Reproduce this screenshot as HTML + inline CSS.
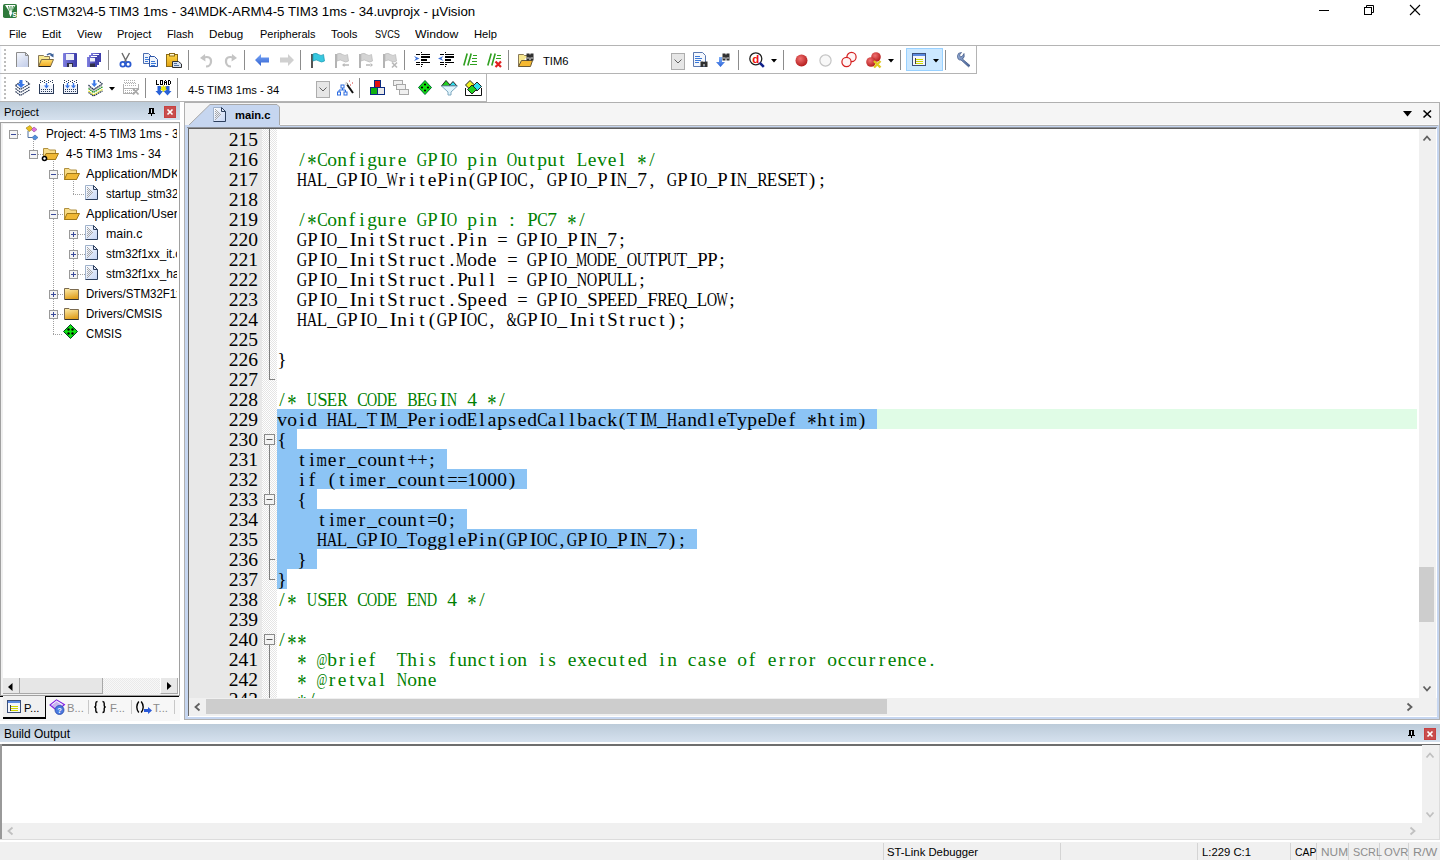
<!DOCTYPE html><html><head><meta charset="utf-8"><style>
html,body{margin:0;padding:0;width:1440px;height:860px;overflow:hidden;background:#fff;position:relative}
.t{position:absolute;white-space:nowrap}
svg{position:absolute;overflow:visible}
.c{position:absolute;left:277px;height:20px;white-space:pre;font-family:"Liberation Serif",serif;font-size:19.5px;line-height:20px}
.c i{display:inline-block;width:10px;text-align:center;font-style:normal;height:20px;vertical-align:top}
.c b{display:inline-block;font-weight:normal}
.ln{position:absolute;left:189px;width:69px;text-align:right;font-family:"Liberation Serif",serif;font-size:19.5px;line-height:20px;height:20px;color:#000}
</style></head><body>
<svg style="position:absolute;left:3px;top:4px" width="14" height="14" viewBox="0 0 14 14"><rect x="0" y="0" width="14" height="14" rx="1.8" fill="#2f7a3c"/><path d="M2 1 H12.5 L8.5 8 L9.5 8.5 L7.5 13 L6 9 L6.5 8 Z" fill="#fff"/><path d="M5.5 2 L6.5 6.5 M8 2 V6.5 M10.5 2 L9.5 6.5" stroke="#4d9a5a" stroke-width="1.1"/><text x="9.3" y="13.2" font-size="8.5" font-family="Liberation Sans" font-weight="bold" fill="#fff">s</text></svg>
<div class="t" style="left:23px;top:4.76px;line-height:13.28px;font-size:13.28px;color:#000;font-weight:normal;font-family:'Liberation Sans',sans-serif;">C:\STM32\4-5 TIM3 1ms - 34\MDK-ARM\4-5 TIM3 1ms - 34.uvprojx - µVision</div>
<div style="position:absolute;left:1319px;top:10px;width:10px;height:1px;background:#000"></div>
<svg style="position:absolute;left:1364px;top:5px" width="11" height="11" viewBox="0 0 11 11"><rect x="0.5" y="2.5" width="7" height="7" fill="none" stroke="#000"/><path d="M2.5 2.5 V0.5 H9.5 V7.5 H7.5" fill="none" stroke="#000"/></svg>
<svg style="position:absolute;left:1410px;top:5px" width="11" height="11" viewBox="0 0 11 11"><path d="M0 0 L10 10 M10 0 L0 10" stroke="#000" stroke-width="1.1"/></svg>
<div class="t" style="left:9.00px;top:29.15px;line-height:11.4px;font-size:11.4px;color:#000;font-weight:normal;font-family:'Liberation Sans'"><span style="display:inline-block;transform-origin:0 0;transform:scaleX(0.9535)">File</span></div>
<div class="t" style="left:42.40px;top:29.15px;line-height:11.4px;font-size:11.4px;color:#000;font-weight:normal;font-family:'Liberation Sans'"><span style="display:inline-block;transform-origin:0 0;transform:scaleX(0.9662)">Edit</span></div>
<div class="t" style="left:77.30px;top:29.15px;line-height:11.4px;font-size:11.4px;color:#000;font-weight:normal;font-family:'Liberation Sans'"><span style="display:inline-block;transform-origin:0 0;transform:scaleX(1.0078)">View</span></div>
<div class="t" style="left:117.30px;top:29.15px;line-height:11.4px;font-size:11.4px;color:#000;font-weight:normal;font-family:'Liberation Sans'"><span style="display:inline-block;transform-origin:0 0;transform:scaleX(0.9675)">Project</span></div>
<div class="t" style="left:167.00px;top:29.15px;line-height:11.4px;font-size:11.4px;color:#000;font-weight:normal;font-family:'Liberation Sans'"><span style="display:inline-block;transform-origin:0 0;transform:scaleX(0.9507)">Flash</span></div>
<div class="t" style="left:209.40px;top:29.15px;line-height:11.4px;font-size:11.4px;color:#000;font-weight:normal;font-family:'Liberation Sans'"><span style="display:inline-block;transform-origin:0 0;transform:scaleX(1.0217)">Debug</span></div>
<div class="t" style="left:259.50px;top:29.15px;line-height:11.4px;font-size:11.4px;color:#000;font-weight:normal;font-family:'Liberation Sans'"><span style="display:inline-block;transform-origin:0 0;transform:scaleX(0.9621)">Peripherals</span></div>
<div class="t" style="left:331.00px;top:29.15px;line-height:11.4px;font-size:11.4px;color:#000;font-weight:normal;font-family:'Liberation Sans'"><span style="display:inline-block;transform-origin:0 0;transform:scaleX(0.9955)">Tools</span></div>
<div class="t" style="left:374.50px;top:29.15px;line-height:11.4px;font-size:11.4px;color:#000;font-weight:normal;font-family:'Liberation Sans'"><span style="display:inline-block;transform-origin:0 0;transform:scaleX(0.8048)">SVCS</span></div>
<div class="t" style="left:415.00px;top:29.15px;line-height:11.4px;font-size:11.4px;color:#000;font-weight:normal;font-family:'Liberation Sans'"><span style="display:inline-block;transform-origin:0 0;transform:scaleX(1.0719)">Window</span></div>
<div class="t" style="left:474.00px;top:29.15px;line-height:11.4px;font-size:11.4px;color:#000;font-weight:normal;font-family:'Liberation Sans'"><span style="display:inline-block;transform-origin:0 0;transform:scaleX(0.9818)">Help</span></div>
<div style="position:absolute;left:0px;top:45px;width:1440px;height:1px;background:#b4b4b4"></div>
<div style="position:absolute;left:976px;top:45px;width:1px;height:29px;background:#b4b4b4"></div>
<div style="position:absolute;left:0px;top:73px;width:977px;height:1px;background:#b4b4b4"></div>
<div style="position:absolute;left:486px;top:73px;width:1px;height:29px;background:#b4b4b4"></div>
<div style="position:absolute;left:0px;top:101px;width:487px;height:1px;background:#b4b4b4"></div>
<div style="position:absolute;left:0px;top:46px;width:2px;height:27px;background:linear-gradient(90deg,#eef2fa,#fff)"></div>
<div style="position:absolute;left:0px;top:74px;width:2px;height:27px;background:linear-gradient(90deg,#eef2fa,#fff)"></div>
<div style="position:absolute;left:4px;top:49px;width:2px;height:2px;background:#bdbdbd"></div>
<div style="position:absolute;left:4px;top:53px;width:2px;height:2px;background:#bdbdbd"></div>
<div style="position:absolute;left:4px;top:57px;width:2px;height:2px;background:#bdbdbd"></div>
<div style="position:absolute;left:4px;top:61px;width:2px;height:2px;background:#bdbdbd"></div>
<div style="position:absolute;left:4px;top:65px;width:2px;height:2px;background:#bdbdbd"></div>
<div style="position:absolute;left:4px;top:69px;width:2px;height:2px;background:#bdbdbd"></div>
<div style="position:absolute;left:4px;top:77px;width:2px;height:2px;background:#bdbdbd"></div>
<div style="position:absolute;left:4px;top:81px;width:2px;height:2px;background:#bdbdbd"></div>
<div style="position:absolute;left:4px;top:85px;width:2px;height:2px;background:#bdbdbd"></div>
<div style="position:absolute;left:4px;top:89px;width:2px;height:2px;background:#bdbdbd"></div>
<div style="position:absolute;left:4px;top:93px;width:2px;height:2px;background:#bdbdbd"></div>
<div style="position:absolute;left:4px;top:97px;width:2px;height:2px;background:#bdbdbd"></div>
<div style="position:absolute;left:108px;top:50px;width:1px;height:20px;background:#8c8c8c"></div>
<div style="position:absolute;left:188px;top:50px;width:1px;height:20px;background:#8c8c8c"></div>
<div style="position:absolute;left:244px;top:50px;width:1px;height:20px;background:#8c8c8c"></div>
<div style="position:absolute;left:300px;top:50px;width:1px;height:20px;background:#8c8c8c"></div>
<div style="position:absolute;left:404px;top:50px;width:1px;height:20px;background:#8c8c8c"></div>
<div style="position:absolute;left:508px;top:50px;width:1px;height:20px;background:#8c8c8c"></div>
<div style="position:absolute;left:738px;top:50px;width:1px;height:20px;background:#8c8c8c"></div>
<div style="position:absolute;left:783px;top:50px;width:1px;height:20px;background:#8c8c8c"></div>
<div style="position:absolute;left:900px;top:50px;width:1px;height:20px;background:#8c8c8c"></div>
<div style="position:absolute;left:945px;top:50px;width:1px;height:20px;background:#8c8c8c"></div>
<div style="position:absolute;left:145px;top:78px;width:1px;height:20px;background:#8c8c8c"></div>
<div style="position:absolute;left:177px;top:78px;width:1px;height:20px;background:#8c8c8c"></div>
<div style="position:absolute;left:359px;top:78px;width:1px;height:20px;background:#8c8c8c"></div>
<svg style="position:absolute;left:16px;top:52px" width="13" height="15" viewBox="0 0 13 15"><defs><linearGradient id="gnew" x1="0" y1="0" x2="0.6" y2="1"><stop offset="0" stop-color="#f6f8fd"/><stop offset="1" stop-color="#c8d2ec"/></linearGradient></defs><path d="M0.5 15 V0.5 H9.5 L12.5 3.5 V15 Z" fill="url(#gnew)" stroke="none"/><path d="M0.5 15 V0.5 H9.5 L12.5 3.5 V15" fill="none" stroke="#8c8c8c"/><path d="M9.5 0.5 V3.5 H12.5" fill="none" stroke="#8c8c8c"/></svg>
<svg style="position:absolute;left:38px;top:53px" width="17" height="14" viewBox="0 0 17 14"><defs><linearGradient id="gfo" x1="0" y1="0" x2="0" y2="1"><stop offset="0" stop-color="#ffe070"/><stop offset="1" stop-color="#f0a820"/></linearGradient></defs><path d="M0.5 13.5 V2.5 H5.5 L6.5 3.5 H11.5 V6" fill="#f8e890" stroke="#8a7a58"/><path d="M0.5 13.5 L3.5 6.5 H15.5 L12.5 13.5 Z" fill="url(#gfo)" stroke="#7a6a48"/><path d="M1 13.5 H12.5" stroke="#222"/><path d="M9 2 Q11.5 -0.5 14 1.8" fill="none" stroke="#3a5f98" stroke-width="1.5"/><path d="M12 2.5 L15.5 4.5 L15.5 0.5 Z" fill="#3a5f98"/></svg>
<svg style="position:absolute;left:63px;top:53px" width="14" height="14" viewBox="0 0 14 14"><defs><linearGradient id="gsv" x1="0" y1="0" x2="1" y2="0"><stop offset="0" stop-color="#8080e0"/><stop offset="1" stop-color="#3a3aa8"/></linearGradient></defs><rect x="0" y="0" width="14" height="14" rx="0.8" fill="url(#gsv)"/><rect x="3" y="1" width="8" height="6" fill="#eef0f8"/><rect x="4" y="10" width="6" height="4" fill="#303048"/><rect x="6" y="11" width="3" height="3" fill="#e0e0e0"/></svg>
<svg style="position:absolute;left:87px;top:53px" width="14" height="14" viewBox="0 0 14 14"><defs><linearGradient id="gsa" x1="0" y1="0" x2="1" y2="0"><stop offset="0" stop-color="#8080e0"/><stop offset="1" stop-color="#3a3aa8"/></linearGradient></defs><rect x="4" y="0" width="10" height="9" fill="url(#gsa)"/><rect x="6" y="1" width="6" height="1.5" fill="#fff"/><rect x="2" y="2" width="10" height="10" fill="url(#gsa)"/><rect x="4" y="3" width="6" height="1.5" fill="#fff"/><rect x="0" y="4" width="10" height="10" fill="url(#gsa)"/><rect x="3" y="5" width="5" height="3.5" fill="#eef0f8"/><rect x="3" y="10.5" width="5" height="3.5" fill="#303048"/></svg>
<svg style="position:absolute;left:120px;top:53px" width="11" height="14" viewBox="0 0 11 14"><path d="M2 0 L6.5 9 M9.5 0 L4.5 9" stroke="#6a6a6a" stroke-width="1.4"/><circle cx="2.8" cy="11.2" r="2.4" fill="none" stroke="#2a5ad0" stroke-width="1.8"/><circle cx="8.2" cy="11.2" r="2.4" fill="none" stroke="#2a5ad0" stroke-width="1.8"/></svg>
<svg style="position:absolute;left:143px;top:53px" width="15" height="14" viewBox="0 0 15 14"><path d="M0.5 0.5 H5.5 L8.5 3.5 V10.5 H0.5 Z" fill="#f0f4fb" stroke="#4a6cb0"/><path d="M6.5 3.5 H11.5 L14.5 6.5 V13.5 H6.5 Z" fill="#f0f4fb" stroke="#2b53a8"/><path d="M2 4.5 H5 M2 6.5 H6 M2 8.5 H5 M8 8.5 H12 M8 10.5 H13 M8 12 H12" stroke="#3a78d8" shape-rendering="crispEdges"/></svg>
<svg style="position:absolute;left:166px;top:53px" width="17" height="15" viewBox="0 0 17 15"><defs><linearGradient id="gps" x1="0" y1="0" x2="0" y2="1"><stop offset="0" stop-color="#ffd84a"/><stop offset="1" stop-color="#e0a010"/></linearGradient></defs><rect x="0.5" y="1.5" width="11" height="12" fill="url(#gps)" stroke="#8a6a18"/><rect x="3.5" y="0.5" width="5" height="2.5" fill="#fff8d0" stroke="#8a6a18"/><path d="M6.5 8.5 H12.5 L15.5 11 V14.5 H6.5 Z" fill="#d8e2f0" stroke="#303030"/><path d="M8 10.5 H11 M8 12.5 H13" stroke="#5070a0" shape-rendering="crispEdges"/></svg>
<svg style="position:absolute;left:200px;top:54px" width="13" height="13" viewBox="0 0 13 13"><path d="M3.5 3.5 Q11.5 1.5 11 8 Q10.5 12.5 6 12.5" fill="none" stroke="#c4c4c4" stroke-width="2.2"/><path d="M0 4 L5 0 L5.5 7.5 Z" fill="#c4c4c4"/></svg>
<svg style="position:absolute;left:224px;top:54px" width="13" height="13" viewBox="0 0 13 13"><path d="M9.5 3.5 Q1.5 1.5 2 8 Q2.5 12.5 7 12.5" fill="none" stroke="#c4c4c4" stroke-width="2.2"/><path d="M13 4 L8 0 L7.5 7.5 Z" fill="#c4c4c4"/></svg>
<svg style="position:absolute;left:255px;top:54px" width="15" height="12" viewBox="0 0 15 12"><defs><linearGradient id="gba" x1="0" y1="0" x2="0" y2="1"><stop offset="0" stop-color="#7aa8f8"/><stop offset="1" stop-color="#3060d0"/></linearGradient></defs><path d="M0 6 L6 0 V3.5 H14 V8.5 H6 V12 Z" fill="url(#gba)"/></svg>
<svg style="position:absolute;left:279px;top:54px" width="15" height="12" viewBox="0 0 15 12"><path d="M15 6 L9 0 V3.5 H1 V8.5 H9 V12 Z" fill="#d0d0d0"/></svg>
<svg style="position:absolute;left:311px;top:53px" width="14" height="15" viewBox="0 0 14 15"><rect x="0" y="1" width="2" height="14" fill="#555"/><path d="M2 1 Q5 -0.5 7.5 1.5 Q10 3.5 12.5 1.5 L13.5 8 Q10.5 10 8 8 Q5.5 6 2 8 Z" fill="#38c8e0" stroke="#1898b0" stroke-width="0.7"/></svg>
<svg style="position:absolute;left:335px;top:53px" width="15" height="15" viewBox="0 0 15 15"><rect x="0" y="1" width="2" height="14" fill="#b4b4b4"/><path d="M2 1 Q5 -0.5 7.5 1.5 Q10 3.5 12.5 1.5 L13.5 8 Q10.5 10 8 8 Q5.5 6 2 8 Z" fill="#d4d4d4" stroke="#b8b8b8" stroke-width="0.7"/><path d="M7 12 L9.5 10 V14 Z M9 11.2 H14 V12.8 H9 Z" fill="#b8b8b8"/></svg>
<svg style="position:absolute;left:359px;top:53px" width="15" height="15" viewBox="0 0 15 15"><rect x="0" y="1" width="2" height="14" fill="#b4b4b4"/><path d="M2 1 Q5 -0.5 7.5 1.5 Q10 3.5 12.5 1.5 L13.5 8 Q10.5 10 8 8 Q5.5 6 2 8 Z" fill="#d4d4d4" stroke="#b8b8b8" stroke-width="0.7"/><path d="M14 12 L11.5 10 V14 Z M7 11.2 H12 V12.8 H7 Z" fill="#b8b8b8"/></svg>
<svg style="position:absolute;left:383px;top:53px" width="15" height="15" viewBox="0 0 15 15"><rect x="0" y="1" width="2" height="14" fill="#b4b4b4"/><path d="M2 1 Q5 -0.5 7.5 1.5 Q10 3.5 12.5 1.5 L13.5 8 Q10.5 10 8 8 Q5.5 6 2 8 Z" fill="#d4d4d4" stroke="#b8b8b8" stroke-width="0.7"/><path d="M9 9.5 L14 14.5 M14 9.5 L9 14.5" stroke="#b8b8b8" stroke-width="1.6"/></svg>
<svg style="position:absolute;left:414px;top:52px" width="16" height="16" viewBox="0 0 16 16"><g fill="#000" shape-rendering="crispEdges"><rect x="7" y="0" width="1" height="1"/><rect x="2" y="2" width="4" height="1"/><rect x="7" y="2" width="9" height="1"/><rect x="7" y="4" width="9" height="2"/><rect x="7" y="7" width="6" height="2"/><rect x="2" y="10" width="4" height="1"/><rect x="7" y="10" width="9" height="1"/><rect x="2" y="12" width="4" height="1"/><rect x="7" y="12" width="2" height="1"/><rect x="7" y="14" width="1" height="1"/></g><path d="M0 4 L5.5 6.5 L0 9 L2 6.5 Z" fill="#3a6fd8"/></svg>
<svg style="position:absolute;left:438px;top:52px" width="16" height="16" viewBox="0 0 16 16"><g fill="#000" shape-rendering="crispEdges"><rect x="7" y="0" width="1" height="1"/><rect x="2" y="2" width="4" height="1"/><rect x="7" y="2" width="9" height="1"/><rect x="7" y="4" width="9" height="2"/><rect x="7" y="7" width="6" height="2"/><rect x="2" y="10" width="4" height="1"/><rect x="7" y="10" width="9" height="1"/><rect x="2" y="12" width="4" height="1"/><rect x="7" y="12" width="2" height="1"/><rect x="7" y="14" width="1" height="1"/></g><path d="M5.5 4 L0 6.5 L5.5 9 L3.5 6.5 Z" fill="#3a6fd8"/></svg>
<svg style="position:absolute;left:463px;top:53px" width="15" height="13" viewBox="0 0 15 13"><path d="M4.2 0.5 L0.8 12.5 M8.2 0.5 L4.8 12.5" stroke="#30a020" stroke-width="1.6"/><g fill="#30a020" shape-rendering="crispEdges"><rect x="10" y="2" width="4" height="1"/><rect x="9" y="5" width="5" height="1"/><rect x="9" y="8" width="5" height="1"/><rect x="7" y="11" width="7" height="1"/></g></svg>
<svg style="position:absolute;left:487px;top:53px" width="16" height="15" viewBox="0 0 16 15"><path d="M4.2 0.5 L0.8 12.5 M8.2 0.5 L4.8 12.5" stroke="#30a020" stroke-width="1.6"/><g fill="#30a020" shape-rendering="crispEdges"><rect x="10" y="2" width="4" height="1"/><rect x="9" y="5" width="5" height="1"/></g><path d="M8.5 8.5 L14 14 M14 8.5 L8.5 14" stroke="#e02020" stroke-width="2.2"/></svg>
<svg style="position:absolute;left:518px;top:52px" width="17" height="15" viewBox="0 0 17 15"><path d="M0.5 14.5 V2.5 H5.5 L6.5 3.5 H10" fill="#f8e890" stroke="#8a7a58"/><path d="M0.5 14.5 L3.5 8.5 H14.5 L12.5 14.5 Z" fill="#f5b830" stroke="#6a5a38"/><path d="M8.5 1.5 H11.5 V8.5 H8.5 Z M12.5 1.5 H15.5 V8.5 H12.5 Z" fill="#303030"/><rect x="9.5" y="5" width="1" height="2" fill="#ddd"/><rect x="13.5" y="5" width="1" height="2" fill="#ddd"/><rect x="11" y="2.5" width="2" height="3" fill="#303030"/></svg>
<div class="t" style="left:543px;top:56.02px;line-height:11.2px;font-size:11.2px;color:#000;font-weight:normal;font-family:'Liberation Sans',sans-serif;">TIM6</div>
<div style="position:absolute;left:671px;top:53px;width:14px;height:17px;background:#e6e6e6;border:1px solid #adadad;box-sizing:border-box"></div>
<svg style="position:absolute;left:674px;top:59px" width="8" height="5" viewBox="0 0 8 5"><path d="M0.5 0.5 L4 4 L7.5 0.5" fill="none" stroke="#606060"/></svg>
<svg style="position:absolute;left:693px;top:52px" width="16" height="15" viewBox="0 0 16 15"><path d="M0.5 0.5 H9.5 L12.5 3.5 V14.5 H0.5 Z" fill="#f4f7fc" stroke="#5a78b0"/><g fill="#3a78d8" shape-rendering="crispEdges"><rect x="2" y="4" width="5" height="1"/><rect x="2" y="6" width="7" height="1"/><rect x="2" y="8" width="6" height="1"/><rect x="2" y="10" width="4" height="1"/></g><path d="M7.5 9.5 H10.5 V15 H7.5 Z M11.5 9.5 H14.5 V15 H11.5 Z" fill="#303030"/><rect x="10" y="10" width="2" height="2" fill="#303030"/></svg>
<svg style="position:absolute;left:716px;top:52px" width="16" height="16" viewBox="0 0 16 16"><defs><linearGradient id="gda" x1="0" y1="0" x2="0" y2="1"><stop offset="0" stop-color="#80b0f8"/><stop offset="1" stop-color="#2a62d8"/></linearGradient></defs><path d="M3 5 V10 H0 L4.5 15 L9 10 H6 V5 Z" fill="url(#gda)"/><path d="M6.5 1.5 H9.5 V8.5 H6.5 Z M10.5 1.5 H13.5 V8.5 H10.5 Z" fill="#303030"/><rect x="9" y="2.5" width="2" height="3" fill="#303030"/><rect x="7.5" y="5" width="1" height="2" fill="#ddd"/><rect x="11.5" y="5" width="1" height="2" fill="#ddd"/></svg>
<svg style="position:absolute;left:749px;top:52px" width="16" height="16" viewBox="0 0 16 16"><circle cx="6.8" cy="6.8" r="6" fill="#fff" stroke="#202020" stroke-width="1.3"/><text x="3.2" y="11.3" font-size="11.5" font-family="Liberation Sans" font-weight="bold" fill="#f01010">d</text><path d="M10.8 10.8 L14.8 14.8" stroke="#10208a" stroke-width="2.6"/></svg>
<svg style="position:absolute;left:771px;top:59px" width="6" height="4" viewBox="0 0 6 4"><path d="M0 0 H6 L3 3.5 Z" fill="#000"/></svg>
<svg style="position:absolute;left:795px;top:54px" width="13" height="13" viewBox="0 0 13 13"><defs><radialGradient id="rb" cx="0.4" cy="0.35" r="0.7"><stop offset="0" stop-color="#f07070"/><stop offset="1" stop-color="#b01818"/></radialGradient></defs><circle cx="6.5" cy="6.5" r="6" fill="url(#rb)"/></svg>
<svg style="position:absolute;left:819px;top:54px" width="13" height="13" viewBox="0 0 13 13"><circle cx="6.5" cy="6.5" r="5.6" fill="#f8f8f8" stroke="#c4c4c4" stroke-width="1.2"/></svg>
<svg style="position:absolute;left:841px;top:52px" width="16" height="15" viewBox="0 0 16 15"><circle cx="10.5" cy="5" r="4.6" fill="#fff4f4" stroke="#d42020" stroke-width="1.2"/><circle cx="5.5" cy="10" r="4.6" fill="#fff4f4" stroke="#d42020" stroke-width="1.2"/></svg>
<svg style="position:absolute;left:866px;top:52px" width="17" height="16" viewBox="0 0 17 16"><defs><radialGradient id="rb2" cx="0.4" cy="0.35" r="0.7"><stop offset="0" stop-color="#f07070"/><stop offset="1" stop-color="#b01818"/></radialGradient></defs><circle cx="10" cy="5" r="4.8" fill="url(#rb2)"/><circle cx="5" cy="10" r="4.8" fill="url(#rb2)"/><path d="M8 9 L14.5 15.5 M14.5 9 L8 15.5" stroke="#e0c820" stroke-width="2.4"/></svg>
<svg style="position:absolute;left:888px;top:59px" width="6" height="4" viewBox="0 0 6 4"><path d="M0 0 H6 L3 3.5 Z" fill="#000"/></svg>
<div style="position:absolute;left:906px;top:48px;width:37px;height:23px;background:#cce8ff;border:1px solid #99d1ff;box-sizing:border-box"></div>
<svg style="position:absolute;left:912px;top:53px" width="15" height="14" viewBox="0 0 15 14"><rect x="0.5" y="0.5" width="13" height="12" fill="#f4f6fb" stroke="#3b4f7a"/><rect x="1" y="1" width="12" height="2" fill="#5b8ae0"/><g shape-rendering="crispEdges"><rect x="3" y="5" width="1" height="6" fill="#444"/><rect x="4" y="6" width="7" height="1" fill="#d0d800"/><rect x="4" y="8" width="7" height="1" fill="#d0d800"/><rect x="4" y="10" width="7" height="1" fill="#d0d800"/></g></svg>
<svg style="position:absolute;left:933px;top:59px" width="6" height="4" viewBox="0 0 6 4"><path d="M0 0 H6 L3 3.5 Z" fill="#000"/></svg>
<svg style="position:absolute;left:956px;top:52px" width="15" height="15" viewBox="0 0 15 15"><defs><linearGradient id="gwr" x1="0" y1="0" x2="1" y2="1"><stop offset="0" stop-color="#a0b8e0"/><stop offset="1" stop-color="#405c90"/></linearGradient></defs><path d="M1.5 4 Q1.5 0.5 5.5 0.5 L3.5 3 L4.5 5 L6.5 4 L8 1.5 Q9 5.5 6.5 7 L14 13.5 L12.5 14.8 L5 8 Q1.5 8.5 1.5 4 Z" fill="url(#gwr)" stroke="#3a5080" stroke-width="0.7"/></svg>
<svg style="position:absolute;left:15px;top:80px" width="16" height="16" viewBox="0 0 16 16"><g fill="none" stroke="#203050" stroke-width="1.1" stroke-dasharray="1.6 0.6"><path d="M0.5 5.5 L5.5 9.5 L14.5 4 L10.5 0.5 M0.5 5.5 L5.5 1.8"/><path d="M0.5 8.5 L5.5 12.5 L14.5 7"/><path d="M0.5 11.5 L5.5 15.5 L14.5 10"/></g><path d="M4.5 0 H7.5 V4 H10 L6 8 L2 4 H4.5 Z" fill="#3a78e8"/></svg>
<svg style="position:absolute;left:39px;top:80px" width="15" height="14" viewBox="0 0 15 14"><rect x="1" y="5" width="13" height="8" fill="#f0f4fc"/><g fill="#2a3a58" shape-rendering="crispEdges"><rect x="1" y="0" width="1" height="1"/><rect x="1" y="2" width="1" height="1"/><rect x="5" y="0" width="1" height="1"/><rect x="5" y="2" width="1" height="1"/><rect x="9" y="0" width="1" height="1"/><rect x="9" y="2" width="1" height="1"/><rect x="13" y="0" width="1" height="1"/><rect x="13" y="2" width="1" height="1"/><rect x="3" y="1" width="1" height="1"/><rect x="7" y="1" width="1" height="1"/><rect x="11" y="1" width="1" height="1"/><rect x="2" y="9" width="1" height="1"/><rect x="4" y="9" width="1" height="1"/><rect x="6" y="9" width="1" height="1"/><rect x="8" y="9" width="1" height="1"/><rect x="10" y="9" width="1" height="1"/><rect x="12" y="9" width="1" height="1"/><rect x="2" y="11" width="1" height="1"/><rect x="4" y="11" width="1" height="1"/><rect x="6" y="11" width="1" height="1"/><rect x="8" y="11" width="1" height="1"/><rect x="10" y="11" width="1" height="1"/><rect x="12" y="11" width="1" height="1"/><rect x="0" y="4" width="1" height="10"/><rect x="14" y="4" width="1" height="10"/><rect x="0" y="13" width="15" height="1"/></g><path d="M6.8 3 H8.2 V5.5 H10.0 L7.5 8.5 L5.0 5.5 H6.8 Z" fill="#3a78e8"/></svg>
<svg style="position:absolute;left:63px;top:80px" width="15" height="14" viewBox="0 0 15 14"><rect x="1" y="5" width="13" height="8" fill="#f0f4fc"/><g fill="#2a3a58" shape-rendering="crispEdges"><rect x="1" y="0" width="1" height="1"/><rect x="1" y="2" width="1" height="1"/><rect x="5" y="0" width="1" height="1"/><rect x="5" y="2" width="1" height="1"/><rect x="9" y="0" width="1" height="1"/><rect x="9" y="2" width="1" height="1"/><rect x="13" y="0" width="1" height="1"/><rect x="13" y="2" width="1" height="1"/><rect x="3" y="1" width="1" height="1"/><rect x="7" y="1" width="1" height="1"/><rect x="11" y="1" width="1" height="1"/><rect x="2" y="9" width="1" height="1"/><rect x="4" y="9" width="1" height="1"/><rect x="6" y="9" width="1" height="1"/><rect x="8" y="9" width="1" height="1"/><rect x="10" y="9" width="1" height="1"/><rect x="12" y="9" width="1" height="1"/><rect x="2" y="11" width="1" height="1"/><rect x="4" y="11" width="1" height="1"/><rect x="6" y="11" width="1" height="1"/><rect x="8" y="11" width="1" height="1"/><rect x="10" y="11" width="1" height="1"/><rect x="12" y="11" width="1" height="1"/><rect x="0" y="4" width="1" height="10"/><rect x="14" y="4" width="1" height="10"/><rect x="0" y="13" width="15" height="1"/></g><path d="M3.8 3 H5.2 V5.5 H7.0 L4.5 8.5 L2.0 5.5 H3.8 Z" fill="#3a78e8"/><path d="M9.8 3 H11.2 V5.5 H13.0 L10.5 8.5 L8.0 5.5 H9.8 Z" fill="#3a78e8"/></svg>
<svg style="position:absolute;left:88px;top:80px" width="16" height="16" viewBox="0 0 16 16"><path d="M0.5 5 L5.5 9.5 L14 3 L14 6.5 L5.5 12 L0.5 8 Z" fill="#c8c8c8"/><g fill="none" stroke-width="1.1" stroke-dasharray="1.6 0.6"><path d="M0.5 5 L5.5 9.5 L14.5 4 M10 0.5 L14.5 4" stroke="#203050"/><path d="M0.5 8.5 L5.5 12.5 L14.5 7" stroke="#109010"/><path d="M0.5 11 L5.5 15 L14.5 9.5" stroke="#e0e000"/><path d="M0.5 12.5 L5.5 16 L14.5 11" stroke="#203050"/></g><path d="M5.3 0 H7.3 V3.5 H9.3 L6.3 7 L3.3 3.5 H5.3 Z" fill="#3a78e8"/></svg>
<svg style="position:absolute;left:109px;top:87px" width="6" height="4" viewBox="0 0 6 4"><path d="M0 0 H6 L3 3.5 Z" fill="#000"/></svg>
<svg style="position:absolute;left:123px;top:79px" width="17" height="17" viewBox="0 0 17 17"><g fill="#b0b0b0" shape-rendering="crispEdges"><rect x="1" y="1" width="1" height="1"/><rect x="3" y="1" width="1" height="1"/><rect x="5" y="1" width="1" height="1"/><rect x="7" y="1" width="1" height="1"/><rect x="9" y="1" width="1" height="1"/><rect x="11" y="1" width="1" height="1"/><rect x="1" y="3" width="1" height="1"/><rect x="3" y="3" width="1" height="1"/><rect x="5" y="3" width="1" height="1"/><rect x="7" y="3" width="1" height="1"/><rect x="9" y="3" width="1" height="1"/><rect x="11" y="3" width="1" height="1"/><rect x="2" y="4" width="1" height="1"/><rect x="4" y="4" width="1" height="1"/><rect x="6" y="4" width="1" height="1"/><rect x="8" y="4" width="1" height="1"/><rect x="10" y="4" width="1" height="1"/><rect x="12" y="4" width="1" height="1"/><rect x="2" y="6" width="1" height="1"/><rect x="4" y="6" width="1" height="1"/><rect x="6" y="6" width="1" height="1"/><rect x="8" y="6" width="1" height="1"/><rect x="10" y="6" width="1" height="1"/><rect x="12" y="6" width="1" height="1"/><rect x="0" y="5" width="1" height="10"/><rect x="15" y="5" width="1" height="6"/><rect x="0" y="14" width="10" height="1"/><rect x="0" y="9" width="16" height="1"/><rect x="2" y="11" width="1" height="1"/><rect x="4" y="11" width="1" height="1"/><rect x="6" y="11" width="1" height="1"/><rect x="8" y="11" width="1" height="1"/><rect x="10" y="11" width="1" height="1"/><rect x="2" y="13" width="1" height="1"/><rect x="4" y="13" width="1" height="1"/><rect x="6" y="13" width="1" height="1"/><rect x="8" y="13" width="1" height="1"/><rect x="10" y="13" width="1" height="1"/></g><path d="M10 9.5 L15.5 15.5 M15.5 9.5 L10 15.5" stroke="#a8a8a8" stroke-width="1.8"/></svg>
<svg style="position:absolute;left:155px;top:79px" width="17" height="17" viewBox="0 0 17 17"><g fill="#000" shape-rendering="crispEdges"><rect x="1" y="1" width="1" height="5"/><rect x="1" y="5" width="3" height="1"/><rect x="5" y="1" width="3" height="1"/><rect x="5" y="5" width="3" height="1"/><rect x="5" y="1" width="1" height="5"/><rect x="7" y="1" width="1" height="5"/><rect x="9" y="2" width="1" height="4"/><rect x="11" y="2" width="1" height="4"/><rect x="10" y="1" width="1" height="1"/><rect x="9" y="3" width="3" height="1"/><rect x="13" y="1" width="2" height="1"/><rect x="13" y="5" width="2" height="1"/><rect x="13" y="1" width="1" height="5"/><rect x="15" y="2" width="1" height="3"/></g><path d="M2.5 7 V12 H0.5 L4.5 16.5 L8 12 H6 V7 Z M10.5 7 V12 H8.5 L12.5 16.5 L16.5 12 H14.5 V7 Z" fill="#2a62d8"/><path d="M8.5 6 L9.3 8 L11.3 7.5 L10.3 9.3 L11.8 10.8 L9.6 11 L8.5 13 L7.4 11 L5.2 10.8 L6.7 9.3 L5.7 7.5 L7.7 8 Z" fill="#f0f000" stroke="#c8c800" stroke-width="0.4"/></svg>
<div class="t" style="left:188px;top:85.12px;line-height:11.2px;font-size:11.2px;color:#000;font-weight:normal;font-family:'Liberation Sans',sans-serif;">4-5 TIM3 1ms - 34</div>
<div style="position:absolute;left:316px;top:81px;width:14px;height:17px;background:#e6e6e6;border:1px solid #adadad;box-sizing:border-box"></div>
<svg style="position:absolute;left:319px;top:87px" width="8" height="5" viewBox="0 0 8 5"><path d="M0.5 0.5 L4 4 L7.5 0.5" fill="none" stroke="#606060"/></svg>
<svg style="position:absolute;left:337px;top:80px" width="17" height="16" viewBox="0 0 17 16"><path d="M9 3 L16 13" stroke="#111" stroke-width="2"/><path d="M8 2 L10 5" stroke="#eee" stroke-width="1.5"/><rect x="4" y="5" width="3" height="3" fill="none" stroke="#2a6ae0"/><rect x="0.5" y="12" width="3" height="3" fill="none" stroke="#2a6ae0"/><rect x="7" y="12" width="3" height="3" fill="none" stroke="#2a6ae0"/><path d="M5.5 8 V10 H2 V12 M5.5 10 H8.5 V12" fill="none" stroke="#2a6ae0"/><path d="M12 1 H13 M15 3 H16 M13 5 H14" stroke="#d03030"/></svg>
<svg style="position:absolute;left:370px;top:80px" width="15" height="16" viewBox="0 0 15 16"><rect x="4.5" y="0.5" width="6" height="7" fill="#e01010" stroke="#0a2a80"/><rect x="0.5" y="7.5" width="7" height="7" fill="#10b010" stroke="#0a2a80"/><rect x="7.5" y="7.5" width="7" height="7" fill="#e8e8e8" stroke="#0a2a80"/></svg>
<svg style="position:absolute;left:393px;top:80px" width="16" height="16" viewBox="0 0 16 16"><rect x="0.5" y="0.5" width="9" height="5" fill="#f0f0f0" stroke="#a8a8a8"/><rect x="3.5" y="4.5" width="9" height="5" fill="#f0f0f0" stroke="#a8a8a8"/><rect x="6.5" y="9.5" width="9" height="5" fill="#f0f0f0" stroke="#a8a8a8"/></svg>
<svg style="position:absolute;left:418px;top:80px" width="14" height="15" viewBox="0 0 14 15"><path d="M7 0.5 L13.5 7.5 L7 14.5 L0.5 7.5 Z" fill="#10e010" stroke="#063"/><circle cx="7" cy="4.5" r="1.1" fill="#000"/><circle cx="4" cy="7.5" r="1.1" fill="#000"/><circle cx="10" cy="7.5" r="1.1" fill="#000"/><circle cx="7" cy="10.5" r="1.1" fill="#000"/></svg>
<svg style="position:absolute;left:441px;top:80px" width="17" height="16" viewBox="0 0 17 16"><path d="M0.5 6 L5 0.5 L10 6 Z" fill="#20d020" stroke="#222"/><path d="M8 6 L12 1.5 L16 6 Z" fill="#30e0f0" stroke="#222"/><path d="M0.5 6 H16.5 L10 12 V15 H7 V12 Z" fill="#e0f4fc" stroke="#7fa8c0"/></svg>
<svg style="position:absolute;left:465px;top:80px" width="17" height="16" viewBox="0 0 17 16"><path d="M0.5 8 V15.5 H16.5 V8" fill="none" stroke="#111"/><path d="M5 0.5 L9.5 5 L5 9.5 L0.5 5 Z" fill="#f0f020" stroke="#222"/><path d="M12 2 L16.5 6.5 L12 11 L7.5 6.5 Z" fill="#30e0f0" stroke="#222"/><path d="M7 5 L11.5 9.5 L7 14 L2.5 9.5 Z" fill="#20d020" stroke="#222"/></svg>
<div style="position:absolute;left:0px;top:102px;width:180px;height:18px;background:linear-gradient(#bccbd9,#d5e1ee)"></div>
<div class="t" style="left:4px;top:107.02px;line-height:11.2px;font-size:11.2px;color:#000;font-weight:normal;font-family:'Liberation Sans',sans-serif;">Project</div>
<svg style="position:absolute;left:148px;top:108px" width="8" height="8" viewBox="0 0 8 8"><rect x="1" y="0" width="5" height="5" fill="#000"/><rect x="3" y="1" width="1" height="4" fill="#dfe8f2"/><rect x="0" y="5" width="7" height="1" fill="#000"/><rect x="3" y="6" width="1" height="2" fill="#000"/></svg>
<div style="position:absolute;left:164px;top:106px;width:12px;height:12px;background:#c84e4e;box-shadow:inset 0 0 0 1px #c84040"></div>
<svg style="position:absolute;left:164px;top:106px" width="12" height="12" viewBox="0 0 12 12"><path d="M3.5 3.5 L8.5 8.5 M8.5 3.5 L3.5 8.5" stroke="#fff" stroke-width="1.7"/></svg>
<div style="position:absolute;left:0px;top:122px;width:180px;height:574px;background:#fff;border:1px solid #a0a0a0;box-sizing:border-box"></div>
<div style="position:absolute;left:1px;top:123px;width:178px;height:1px;background:#f0f0f0"></div>
<div style="position:absolute;left:1px;top:123px;width:2px;height:572px;background:#f0f0f0"></div>
<div style="position:absolute;left:1px;top:124px;width:177px;height:550px;overflow:hidden">
</div>
<div style="position:absolute;left:33px;top:139px;width:1px;height:11px;background:repeating-linear-gradient(#a0a0a0 0 1px,transparent 1px 2px)"></div>
<div style="position:absolute;left:53px;top:159px;width:1px;height:176px;background:repeating-linear-gradient(#a0a0a0 0 1px,transparent 1px 2px)"></div>
<div style="position:absolute;left:73px;top:239px;width:1px;height:31px;background:repeating-linear-gradient(#a0a0a0 0 1px,transparent 1px 2px)"></div>
<div style="position:absolute;left:18px;top:134px;width:4px;height:1px;background:repeating-linear-gradient(90deg,#a0a0a0 0 1px,transparent 1px 2px)"></div>
<div style="position:absolute;left:38px;top:154px;width:5px;height:1px;background:repeating-linear-gradient(90deg,#a0a0a0 0 1px,transparent 1px 2px)"></div>
<div style="position:absolute;left:58px;top:174px;width:5px;height:1px;background:repeating-linear-gradient(90deg,#a0a0a0 0 1px,transparent 1px 2px)"></div>
<div style="position:absolute;left:58px;top:214px;width:5px;height:1px;background:repeating-linear-gradient(90deg,#a0a0a0 0 1px,transparent 1px 2px)"></div>
<div style="position:absolute;left:58px;top:294px;width:5px;height:1px;background:repeating-linear-gradient(90deg,#a0a0a0 0 1px,transparent 1px 2px)"></div>
<div style="position:absolute;left:58px;top:314px;width:5px;height:1px;background:repeating-linear-gradient(90deg,#a0a0a0 0 1px,transparent 1px 2px)"></div>
<div style="position:absolute;left:53px;top:334px;width:10px;height:1px;background:repeating-linear-gradient(90deg,#a0a0a0 0 1px,transparent 1px 2px)"></div>
<div style="position:absolute;left:73px;top:179px;width:1px;height:15px;background:repeating-linear-gradient(#a0a0a0 0 1px,transparent 1px 2px)"></div>
<div style="position:absolute;left:73px;top:194px;width:12px;height:1px;background:repeating-linear-gradient(90deg,#a0a0a0 0 1px,transparent 1px 2px)"></div>
<div style="position:absolute;left:78px;top:234px;width:7px;height:1px;background:repeating-linear-gradient(90deg,#a0a0a0 0 1px,transparent 1px 2px)"></div>
<div style="position:absolute;left:78px;top:254px;width:7px;height:1px;background:repeating-linear-gradient(90deg,#a0a0a0 0 1px,transparent 1px 2px)"></div>
<div style="position:absolute;left:78px;top:274px;width:7px;height:1px;background:repeating-linear-gradient(90deg,#a0a0a0 0 1px,transparent 1px 2px)"></div>
<svg style="position:absolute;left:9px;top:130px" width="9" height="9" viewBox="0 0 9 9"><rect x="0.5" y="0.5" width="8" height="8" fill="#f4f4f4" stroke="#9a9a9a"/><path d="M2 4.5 H7" stroke="#3a4a9a"/></svg>
<svg style="position:absolute;left:29px;top:150px" width="9" height="9" viewBox="0 0 9 9"><rect x="0.5" y="0.5" width="8" height="8" fill="#f4f4f4" stroke="#9a9a9a"/><path d="M2 4.5 H7" stroke="#3a4a9a"/></svg>
<svg style="position:absolute;left:49px;top:170px" width="9" height="9" viewBox="0 0 9 9"><rect x="0.5" y="0.5" width="8" height="8" fill="#f4f4f4" stroke="#9a9a9a"/><path d="M2 4.5 H7" stroke="#3a4a9a"/></svg>
<svg style="position:absolute;left:49px;top:210px" width="9" height="9" viewBox="0 0 9 9"><rect x="0.5" y="0.5" width="8" height="8" fill="#f4f4f4" stroke="#9a9a9a"/><path d="M2 4.5 H7" stroke="#3a4a9a"/></svg>
<svg style="position:absolute;left:69px;top:230px" width="9" height="9" viewBox="0 0 9 9"><rect x="0.5" y="0.5" width="8" height="8" fill="#f4f4f4" stroke="#9a9a9a"/><path d="M2 4.5 H7" stroke="#3a4a9a"/><path d="M4.5 2 V7" stroke="#3a4a9a"/></svg>
<svg style="position:absolute;left:69px;top:250px" width="9" height="9" viewBox="0 0 9 9"><rect x="0.5" y="0.5" width="8" height="8" fill="#f4f4f4" stroke="#9a9a9a"/><path d="M2 4.5 H7" stroke="#3a4a9a"/><path d="M4.5 2 V7" stroke="#3a4a9a"/></svg>
<svg style="position:absolute;left:69px;top:270px" width="9" height="9" viewBox="0 0 9 9"><rect x="0.5" y="0.5" width="8" height="8" fill="#f4f4f4" stroke="#9a9a9a"/><path d="M2 4.5 H7" stroke="#3a4a9a"/><path d="M4.5 2 V7" stroke="#3a4a9a"/></svg>
<svg style="position:absolute;left:49px;top:290px" width="9" height="9" viewBox="0 0 9 9"><rect x="0.5" y="0.5" width="8" height="8" fill="#f4f4f4" stroke="#9a9a9a"/><path d="M2 4.5 H7" stroke="#3a4a9a"/><path d="M4.5 2 V7" stroke="#3a4a9a"/></svg>
<svg style="position:absolute;left:49px;top:310px" width="9" height="9" viewBox="0 0 9 9"><rect x="0.5" y="0.5" width="8" height="8" fill="#f4f4f4" stroke="#9a9a9a"/><path d="M2 4.5 H7" stroke="#3a4a9a"/><path d="M4.5 2 V7" stroke="#3a4a9a"/></svg>
<svg style="position:absolute;left:23px;top:125px" width="16" height="16" viewBox="0 0 16 16"><path d="M3 3 L7 0.5 L10 4 L6 6.5 Z" fill="#e8c020" stroke="#9a7a10" stroke-width="0.6"/><path d="M11 2 L14 4.5 L11 7 L8.5 4.5 Z" fill="#e070e0" stroke="#905090" stroke-width="0.6"/><path d="M12 10 L15 12.5 L12 15 L9 12.5 Z" fill="#5090e0" stroke="#3060a0" stroke-width="0.6"/><path d="M5 6 V12.5 H9" fill="none" stroke="#5070a0"/></svg>
<svg style="position:absolute;left:43px;top:147px" width="16" height="13" viewBox="0 0 16 13"><path d="M0.5 1.5 H5 L6.5 3 H12.5 V12.5 H0.5 Z" fill="#f8dc88" stroke="#b09040"/><path d="M3 6.5 H15.5 L12.5 12.5 H0.5 Z" fill="#f0b834" stroke="#a07818"/></svg>
<svg style="position:absolute;left:41px;top:155px" width="7" height="7" viewBox="0 0 7 7"><circle cx="3.5" cy="3.5" r="2.8" fill="#000"/><circle cx="3.5" cy="3.5" r="1.2" fill="#fff"/></svg>
<svg style="position:absolute;left:64px;top:167px" width="16" height="13" viewBox="0 0 16 13"><path d="M0.5 1.5 H5 L6.5 3 H12.5 V12.5 H0.5 Z" fill="#f8dc88" stroke="#b09040"/><path d="M3 6.5 H15.5 L12.5 12.5 H0.5 Z" fill="#f0b834" stroke="#a07818"/></svg>
<svg style="position:absolute;left:85px;top:185px" width="13" height="15" viewBox="0 0 13 15"><defs><linearGradient id="gfi" x1="0" y1="0" x2="1" y2="1"><stop offset="0" stop-color="#ffffff"/><stop offset="1" stop-color="#c4d4f4"/></linearGradient></defs><path d="M0.5 0.5 H8.5 L12.5 4.5 V14.5 H0.5 Z" fill="url(#gfi)"/><path d="M0.5 14.5 V0.5 H8.5" fill="none" stroke="#9fb2cc"/><path d="M8.5 0.5 L12.5 4.5 V14.5 H0.5" fill="none" stroke="#2c3e5c"/><path d="M8.5 0.5 V4.5 H12.5" fill="none" stroke="#2c3e5c"/><g fill="#a8a8a8" shape-rendering="crispEdges"><rect x="2" y="2" width="1" height="1"/><rect x="2" y="4" width="1" height="1"/><rect x="2" y="6" width="1" height="1"/><rect x="2" y="8" width="1" height="1"/><rect x="2" y="10" width="1" height="1"/><rect x="2" y="12" width="1" height="1"/><rect x="3" y="3" width="1" height="1"/><rect x="3" y="5" width="1" height="1"/><rect x="3" y="7" width="1" height="1"/><rect x="3" y="9" width="1" height="1"/><rect x="3" y="11" width="1" height="1"/><rect x="4" y="4" width="1" height="1"/><rect x="4" y="6" width="1" height="1"/><rect x="4" y="8" width="1" height="1"/><rect x="4" y="10" width="1" height="1"/><rect x="5" y="5" width="1" height="1"/><rect x="5" y="7" width="1" height="1"/><rect x="5" y="9" width="1" height="1"/><rect x="6" y="6" width="1" height="1"/><rect x="6" y="8" width="1" height="1"/><rect x="7" y="7" width="1" height="1"/></g></svg>
<svg style="position:absolute;left:64px;top:207px" width="16" height="13" viewBox="0 0 16 13"><path d="M0.5 1.5 H5 L6.5 3 H12.5 V12.5 H0.5 Z" fill="#f8dc88" stroke="#b09040"/><path d="M3 6.5 H15.5 L12.5 12.5 H0.5 Z" fill="#f0b834" stroke="#a07818"/></svg>
<svg style="position:absolute;left:85px;top:225px" width="13" height="15" viewBox="0 0 13 15"><defs><linearGradient id="gfi" x1="0" y1="0" x2="1" y2="1"><stop offset="0" stop-color="#ffffff"/><stop offset="1" stop-color="#c4d4f4"/></linearGradient></defs><path d="M0.5 0.5 H8.5 L12.5 4.5 V14.5 H0.5 Z" fill="url(#gfi)"/><path d="M0.5 14.5 V0.5 H8.5" fill="none" stroke="#9fb2cc"/><path d="M8.5 0.5 L12.5 4.5 V14.5 H0.5" fill="none" stroke="#2c3e5c"/><path d="M8.5 0.5 V4.5 H12.5" fill="none" stroke="#2c3e5c"/><g fill="#a8a8a8" shape-rendering="crispEdges"><rect x="2" y="2" width="1" height="1"/><rect x="2" y="4" width="1" height="1"/><rect x="2" y="6" width="1" height="1"/><rect x="2" y="8" width="1" height="1"/><rect x="2" y="10" width="1" height="1"/><rect x="2" y="12" width="1" height="1"/><rect x="3" y="3" width="1" height="1"/><rect x="3" y="5" width="1" height="1"/><rect x="3" y="7" width="1" height="1"/><rect x="3" y="9" width="1" height="1"/><rect x="3" y="11" width="1" height="1"/><rect x="4" y="4" width="1" height="1"/><rect x="4" y="6" width="1" height="1"/><rect x="4" y="8" width="1" height="1"/><rect x="4" y="10" width="1" height="1"/><rect x="5" y="5" width="1" height="1"/><rect x="5" y="7" width="1" height="1"/><rect x="5" y="9" width="1" height="1"/><rect x="6" y="6" width="1" height="1"/><rect x="6" y="8" width="1" height="1"/><rect x="7" y="7" width="1" height="1"/></g></svg>
<svg style="position:absolute;left:85px;top:245px" width="13" height="15" viewBox="0 0 13 15"><defs><linearGradient id="gfi" x1="0" y1="0" x2="1" y2="1"><stop offset="0" stop-color="#ffffff"/><stop offset="1" stop-color="#c4d4f4"/></linearGradient></defs><path d="M0.5 0.5 H8.5 L12.5 4.5 V14.5 H0.5 Z" fill="url(#gfi)"/><path d="M0.5 14.5 V0.5 H8.5" fill="none" stroke="#9fb2cc"/><path d="M8.5 0.5 L12.5 4.5 V14.5 H0.5" fill="none" stroke="#2c3e5c"/><path d="M8.5 0.5 V4.5 H12.5" fill="none" stroke="#2c3e5c"/><g fill="#a8a8a8" shape-rendering="crispEdges"><rect x="2" y="2" width="1" height="1"/><rect x="2" y="4" width="1" height="1"/><rect x="2" y="6" width="1" height="1"/><rect x="2" y="8" width="1" height="1"/><rect x="2" y="10" width="1" height="1"/><rect x="2" y="12" width="1" height="1"/><rect x="3" y="3" width="1" height="1"/><rect x="3" y="5" width="1" height="1"/><rect x="3" y="7" width="1" height="1"/><rect x="3" y="9" width="1" height="1"/><rect x="3" y="11" width="1" height="1"/><rect x="4" y="4" width="1" height="1"/><rect x="4" y="6" width="1" height="1"/><rect x="4" y="8" width="1" height="1"/><rect x="4" y="10" width="1" height="1"/><rect x="5" y="5" width="1" height="1"/><rect x="5" y="7" width="1" height="1"/><rect x="5" y="9" width="1" height="1"/><rect x="6" y="6" width="1" height="1"/><rect x="6" y="8" width="1" height="1"/><rect x="7" y="7" width="1" height="1"/></g></svg>
<svg style="position:absolute;left:85px;top:265px" width="13" height="15" viewBox="0 0 13 15"><defs><linearGradient id="gfi" x1="0" y1="0" x2="1" y2="1"><stop offset="0" stop-color="#ffffff"/><stop offset="1" stop-color="#c4d4f4"/></linearGradient></defs><path d="M0.5 0.5 H8.5 L12.5 4.5 V14.5 H0.5 Z" fill="url(#gfi)"/><path d="M0.5 14.5 V0.5 H8.5" fill="none" stroke="#9fb2cc"/><path d="M8.5 0.5 L12.5 4.5 V14.5 H0.5" fill="none" stroke="#2c3e5c"/><path d="M8.5 0.5 V4.5 H12.5" fill="none" stroke="#2c3e5c"/><g fill="#a8a8a8" shape-rendering="crispEdges"><rect x="2" y="2" width="1" height="1"/><rect x="2" y="4" width="1" height="1"/><rect x="2" y="6" width="1" height="1"/><rect x="2" y="8" width="1" height="1"/><rect x="2" y="10" width="1" height="1"/><rect x="2" y="12" width="1" height="1"/><rect x="3" y="3" width="1" height="1"/><rect x="3" y="5" width="1" height="1"/><rect x="3" y="7" width="1" height="1"/><rect x="3" y="9" width="1" height="1"/><rect x="3" y="11" width="1" height="1"/><rect x="4" y="4" width="1" height="1"/><rect x="4" y="6" width="1" height="1"/><rect x="4" y="8" width="1" height="1"/><rect x="4" y="10" width="1" height="1"/><rect x="5" y="5" width="1" height="1"/><rect x="5" y="7" width="1" height="1"/><rect x="5" y="9" width="1" height="1"/><rect x="6" y="6" width="1" height="1"/><rect x="6" y="8" width="1" height="1"/><rect x="7" y="7" width="1" height="1"/></g></svg>
<svg style="position:absolute;left:64px;top:287px" width="15" height="13" viewBox="0 0 15 13"><defs><linearGradient id="gcf" x1="0" y1="0" x2="0.3" y2="1"><stop offset="0" stop-color="#fff0b0"/><stop offset="1" stop-color="#e0a020"/></linearGradient></defs><path d="M0.5 1.5 H5 L6 2.5 H14.5 V12.5 H0.5 Z" fill="url(#gcf)" stroke="#7a6a50"/><path d="M1 12.5 H14.5" stroke="#303030"/></svg>
<svg style="position:absolute;left:64px;top:307px" width="15" height="13" viewBox="0 0 15 13"><defs><linearGradient id="gcf" x1="0" y1="0" x2="0.3" y2="1"><stop offset="0" stop-color="#fff0b0"/><stop offset="1" stop-color="#e0a020"/></linearGradient></defs><path d="M0.5 1.5 H5 L6 2.5 H14.5 V12.5 H0.5 Z" fill="url(#gcf)" stroke="#7a6a50"/><path d="M1 12.5 H14.5" stroke="#303030"/></svg>
<svg style="position:absolute;left:63px;top:324px" width="16" height="16" viewBox="0 0 16 16"><path d="M7.5 0.5 L14.5 7.5 L7.5 14.5 L0.5 7.5 Z" fill="#10e010" stroke="#042"/><g fill="#000"><circle cx="5.5" cy="5.5" r="1.2"/><circle cx="9.5" cy="5.5" r="1.2"/><circle cx="5.5" cy="9.5" r="1.2"/><circle cx="9.5" cy="9.5" r="1.2"/></g></svg>
<div style="position:absolute;left:1px;top:124px;width:176px;height:550px;overflow:hidden">
<div class="t" style="left:45px;top:3.90px;line-height:12.4px;font-size:12.4px;font-family:'Liberation Sans'"><span style="display:inline-block;transform-origin:0 0;transform:scaleX(0.95)">Project: 4-5 TIM3 1ms - 34</span></div>
<div class="t" style="left:65px;top:23.90px;line-height:12.4px;font-size:12.4px;font-family:'Liberation Sans'"><span style="display:inline-block;transform-origin:0 0;transform:scaleX(0.94)">4-5 TIM3 1ms - 34</span></div>
<div class="t" style="left:85px;top:43.90px;line-height:12.4px;font-size:12.4px;font-family:'Liberation Sans'"><span style="display:inline-block;transform-origin:0 0;transform:scaleX(1.02)">Application/MDK-ARM</span></div>
<div class="t" style="left:105px;top:63.90px;line-height:12.4px;font-size:12.4px;font-family:'Liberation Sans'"><span style="display:inline-block;transform-origin:0 0;transform:scaleX(0.92)">startup_stm32f103xe.s</span></div>
<div class="t" style="left:85px;top:83.90px;line-height:12.4px;font-size:12.4px;font-family:'Liberation Sans'"><span style="display:inline-block;transform-origin:0 0;transform:scaleX(1.02)">Application/User/Core</span></div>
<div class="t" style="left:105px;top:103.90px;line-height:12.4px;font-size:12.4px;font-family:'Liberation Sans'"><span style="display:inline-block;transform-origin:0 0;transform:scaleX(1.0)">main.c</span></div>
<div class="t" style="left:105px;top:123.90px;line-height:12.4px;font-size:12.4px;font-family:'Liberation Sans'"><span style="display:inline-block;transform-origin:0 0;transform:scaleX(0.95)">stm32f1xx_it.c</span></div>
<div class="t" style="left:105px;top:143.90px;line-height:12.4px;font-size:12.4px;font-family:'Liberation Sans'"><span style="display:inline-block;transform-origin:0 0;transform:scaleX(0.95)">stm32f1xx_hal_msp.c</span></div>
<div class="t" style="left:85px;top:163.90px;line-height:12.4px;font-size:12.4px;font-family:'Liberation Sans'"><span style="display:inline-block;transform-origin:0 0;transform:scaleX(0.93)">Drivers/STM32F1xx_HAL_Driver</span></div>
<div class="t" style="left:85px;top:183.90px;line-height:12.4px;font-size:12.4px;font-family:'Liberation Sans'"><span style="display:inline-block;transform-origin:0 0;transform:scaleX(0.93)">Drivers/CMSIS</span></div>
<div class="t" style="left:85px;top:203.90px;line-height:12.4px;font-size:12.4px;font-family:'Liberation Sans'"><span style="display:inline-block;transform-origin:0 0;transform:scaleX(0.91)">CMSIS</span></div>
</div>
<div style="position:absolute;left:1px;top:678px;width:177px;height:17px;background:#f0f0f0"></div>
<div style="position:absolute;left:3px;top:678px;width:17px;height:16px;background:#e8e8e8;border-right:1px solid #a8a8a8;border-bottom:1px solid #a8a8a8;box-sizing:border-box"></div>
<div style="position:absolute;left:20px;top:678px;width:83px;height:16px;background:#e6e6e6;border-right:1px solid #a8a8a8;border-bottom:1px solid #a8a8a8;box-sizing:border-box"></div>
<div style="position:absolute;left:103px;top:678px;width:57px;height:16px;background:repeating-conic-gradient(#eaeaea 0 25%,#f8f8f8 0 50%) 0 0/2px 2px"></div>
<div style="position:absolute;left:160px;top:678px;width:18px;height:16px;background:#e8e8e8;border-left:1px solid #fff;border-right:1px solid #a8a8a8;border-bottom:1px solid #a8a8a8;box-sizing:border-box"></div>
<svg style="position:absolute;left:8px;top:683px" width="5" height="8" viewBox="0 0 5 8"><path d="M4.5 0 V8 L0 4 Z" fill="#000"/></svg>
<svg style="position:absolute;left:167px;top:682px" width="5" height="8" viewBox="0 0 5 8"><path d="M0 0 V8 L4.5 4 Z" fill="#000"/></svg>
<div style="position:absolute;left:0px;top:696px;width:180px;height:25px;background:#f7f7f7"></div>
<div style="position:absolute;left:46px;top:696px;width:133px;height:1px;background:#000"></div>
<div style="position:absolute;left:0px;top:696px;width:3px;height:1px;background:#000"></div>
<div style="position:absolute;left:3px;top:696px;width:43px;height:23px;background:#f0f0f0;border-left:0;border-right:1px solid #000;border-bottom:2px solid #000;box-sizing:border-box"></div>
<svg style="position:absolute;left:7px;top:700px" width="14" height="13" viewBox="0 0 14 13"><rect x="0.5" y="0.5" width="13" height="12" fill="#f4f6fb" stroke="#3b4f7a"/><rect x="1" y="1" width="12" height="2" fill="#5b8ae0"/><g shape-rendering="crispEdges"><rect x="3" y="5" width="1" height="6" fill="#444"/><rect x="4" y="6" width="7" height="1" fill="#d0d800"/><rect x="4" y="8" width="7" height="1" fill="#d0d800"/><rect x="4" y="10" width="7" height="1" fill="#d0d800"/></g></svg>
<div class="t" style="left:24px;top:702.52px;line-height:11.2px;font-size:11.2px;color:#000;font-weight:normal;font-family:'Liberation Sans',sans-serif;">P...</div>
<svg style="position:absolute;left:49px;top:699px" width="17" height="16" viewBox="0 0 17 16"><path d="M1 6 L7.5 0.8 L15.5 5.5 L8.5 12 Z" fill="#c8b4f0" stroke="#8020e0" stroke-width="1.1"/><path d="M2.5 6 L7.5 2.2 L13.5 5.8" fill="none" stroke="#fff" stroke-width="0.9"/><circle cx="10.5" cy="11" r="4.5" fill="#4a7ae0" stroke="#2a4aa8" stroke-width="0.8"/><text x="8.3" y="14" font-size="7.5" font-family="Liberation Sans" font-weight="bold" fill="#fff">?</text></svg>
<div class="t" style="left:67px;top:702.52px;line-height:11.2px;font-size:11.2px;color:#8a8a8a;font-weight:normal;font-family:'Liberation Sans',sans-serif;">B...</div>
<div style="position:absolute;left:88px;top:700px;width:1px;height:14px;background:#c8c8c8"></div>
<svg style="position:absolute;left:94px;top:701px" width="12" height="12" viewBox="0 0 12 12"><path d="M3.5 0.5 Q1.8 0.5 1.8 2.3 V4.5 Q1.8 6 0.3 6 Q1.8 6 1.8 7.5 V9.7 Q1.8 11.5 3.5 11.5 M8.5 0.5 Q10.2 0.5 10.2 2.3 V4.5 Q10.2 6 11.7 6 Q10.2 6 10.2 7.5 V9.7 Q10.2 11.5 8.5 11.5" fill="none" stroke="#000" stroke-width="1.4"/></svg>
<div class="t" style="left:110px;top:702.52px;line-height:11.2px;font-size:11.2px;color:#8a8a8a;font-weight:normal;font-family:'Liberation Sans',sans-serif;">F...</div>
<div style="position:absolute;left:131px;top:700px;width:1px;height:14px;background:#c8c8c8"></div>
<svg style="position:absolute;left:136px;top:701px" width="8" height="12" viewBox="0 0 8 12"><path d="M2.8 0.5 Q0.8 3 0.8 6 Q0.8 9 2.8 11.5 M5.2 0.5 Q7.2 3 7.2 6 Q7.2 9 5.2 11.5" fill="none" stroke="#000" stroke-width="1.4"/></svg>
<svg style="position:absolute;left:144px;top:707px" width="8" height="7" viewBox="0 0 8 7"><path d="M0 2 H4 V0 L8 3.5 L4 7 V5 H0 Z" fill="#2a5ad8"/></svg>
<div class="t" style="left:153px;top:702.52px;line-height:11.2px;font-size:11.2px;color:#8a8a8a;font-weight:normal;font-family:'Liberation Sans',sans-serif;">T...</div>
<div style="position:absolute;left:174px;top:700px;width:1px;height:14px;background:#c8c8c8"></div>
<div style="position:absolute;left:184px;top:102px;width:1256px;height:618px;background:#b0b0b0"></div>
<div style="position:absolute;left:185px;top:103px;width:1254px;height:22px;background:#f5f5f5"></div>
<svg style="position:absolute;left:184px;top:102px" width="100" height="26" viewBox="0 0 100 26"><path d="M4.5 23.5 L26 2.5 H93 L95.5 5 V23.5 Z" fill="#c6d6f0" stroke="#a8a8a8"/></svg>
<svg style="position:absolute;left:213px;top:107px" width="13" height="15" viewBox="0 0 13 15"><defs><linearGradient id="gfi" x1="0" y1="0" x2="1" y2="1"><stop offset="0" stop-color="#ffffff"/><stop offset="1" stop-color="#c4d4f4"/></linearGradient></defs><path d="M0.5 0.5 H8.5 L12.5 4.5 V14.5 H0.5 Z" fill="url(#gfi)"/><path d="M0.5 14.5 V0.5 H8.5" fill="none" stroke="#9fb2cc"/><path d="M8.5 0.5 L12.5 4.5 V14.5 H0.5" fill="none" stroke="#2c3e5c"/><path d="M8.5 0.5 V4.5 H12.5" fill="none" stroke="#2c3e5c"/><g fill="#a8a8a8" shape-rendering="crispEdges"><rect x="2" y="2" width="1" height="1"/><rect x="2" y="4" width="1" height="1"/><rect x="2" y="6" width="1" height="1"/><rect x="2" y="8" width="1" height="1"/><rect x="2" y="10" width="1" height="1"/><rect x="2" y="12" width="1" height="1"/><rect x="3" y="3" width="1" height="1"/><rect x="3" y="5" width="1" height="1"/><rect x="3" y="7" width="1" height="1"/><rect x="3" y="9" width="1" height="1"/><rect x="3" y="11" width="1" height="1"/><rect x="4" y="4" width="1" height="1"/><rect x="4" y="6" width="1" height="1"/><rect x="4" y="8" width="1" height="1"/><rect x="4" y="10" width="1" height="1"/><rect x="5" y="5" width="1" height="1"/><rect x="5" y="7" width="1" height="1"/><rect x="5" y="9" width="1" height="1"/><rect x="6" y="6" width="1" height="1"/><rect x="6" y="8" width="1" height="1"/><rect x="7" y="7" width="1" height="1"/></g></svg>
<div class="t" style="left:235px;top:110.12px;line-height:11.2px;font-size:11.2px;color:#000;font-weight:bold;font-family:'Liberation Sans',sans-serif;">main.c</div>
<svg style="position:absolute;left:1403px;top:111px" width="9" height="6" viewBox="0 0 9 6"><path d="M0 0 H9 L4.5 5.5 Z" fill="#000"/></svg>
<svg style="position:absolute;left:1423px;top:110px" width="9" height="8" viewBox="0 0 9 8"><path d="M0.5 0.5 L8 7.5 M8 0.5 L0.5 7.5" stroke="#000" stroke-width="1.6"/></svg>
<div style="position:absolute;left:185px;top:125px;width:1254px;height:594px;background:#c6d6f0"></div>
<div style="position:absolute;left:188px;top:128px;width:1248px;height:1px;background:#5f5f5f"></div>
<div style="position:absolute;left:187px;top:127px;width:1250px;height:1px;background:#8c9098"></div>
<div style="position:absolute;left:280px;top:124px;width:1158px;height:1px;background:#fbfbfb"></div>
<div style="position:absolute;left:280px;top:125px;width:1158px;height:1px;background:#b4b4b4"></div>
<div style="position:absolute;left:188px;top:128px;width:1px;height:588px;background:#6a6a6a"></div>
<div style="position:absolute;left:189px;top:129px;width:1248px;height:587px;background:#fff"></div>
<div style="position:absolute;left:189px;top:129px;width:73px;height:569px;background:#e8e8e8"></div>
<div style="position:absolute;left:262px;top:129px;width:15px;height:569px;background:repeating-conic-gradient(#e4e4e4 0 25%,#fff 0 50%) 0 0/2px 2px"></div>
<div style="position:absolute;left:277px;top:409px;width:1140px;height:20px;background:#e0fce6"></div>
<div style="position:absolute;left:277px;top:409px;width:600px;height:20px;background:#8cc4f5"></div>
<div style="position:absolute;left:277px;top:429px;width:20px;height:20px;background:#8cc4f5"></div>
<div style="position:absolute;left:277px;top:449px;width:170px;height:20px;background:#8cc4f5"></div>
<div style="position:absolute;left:277px;top:469px;width:250px;height:20px;background:#8cc4f5"></div>
<div style="position:absolute;left:277px;top:489px;width:40px;height:20px;background:#8cc4f5"></div>
<div style="position:absolute;left:277px;top:509px;width:190px;height:20px;background:#8cc4f5"></div>
<div style="position:absolute;left:277px;top:529px;width:420px;height:20px;background:#8cc4f5"></div>
<div style="position:absolute;left:277px;top:549px;width:40px;height:20px;background:#8cc4f5"></div>
<div style="position:absolute;left:277px;top:569px;width:10px;height:20px;background:#8cc4f5"></div>
<div style="position:absolute;left:189px;top:129px;width:1230px;height:569px;overflow:hidden">
<div class="ln" style="left:0px;top:1px">215</div>
<div class="ln" style="left:0px;top:21px">216</div>
<div class="c" style="left:88px;top:21px;color:#008000"><i> </i><i> </i><i>/</i><i><b style="width:9.75px;margin-left:0.12px;text-align:center;transform:translateY(4px) scale(0.95,1.25)">*</b></i><i><b style="width:13.01px;margin-left:-1.50px;text-align:center;transform:scaleX(0.800)">C</b></i><i>o</i><i>n</i><i>f</i><i>i</i><i>g</i><i>u</i><i>r</i><i>e</i><i> </i><i><b style="width:14.08px;margin-left:-2.04px;text-align:center;transform:scaleX(0.739)">G</b></i><i><b style="width:10.84px;margin-left:-0.42px;text-align:center;transform:scaleX(0.959)">P</b></i><i><b style="width:6.49px;margin-left:1.75px;text-align:center;transform:scaleX(1.150)">I</b></i><i><b style="width:14.08px;margin-left:-2.04px;text-align:center;transform:scaleX(0.739)">O</b></i><i> </i><i>p</i><i>i</i><i>n</i><i> </i><i><b style="width:14.08px;margin-left:-2.04px;text-align:center;transform:scaleX(0.739)">O</b></i><i>u</i><i>t</i><i>p</i><i>u</i><i>t</i><i> </i><i><b style="width:11.91px;margin-left:-0.96px;text-align:center;transform:scaleX(0.873)">L</b></i><i>e</i><i>v</i><i>e</i><i>l</i><i> </i><i><b style="width:9.75px;margin-left:0.12px;text-align:center;transform:translateY(4px) scale(0.95,1.25)">*</b></i><i>/</i></div>
<div class="ln" style="left:0px;top:41px">217</div>
<div class="c" style="left:88px;top:41px;color:#000"><i> </i><i> </i><i><b style="width:14.08px;margin-left:-2.04px;text-align:center;transform:scaleX(0.739)">H</b></i><i><b style="width:14.08px;margin-left:-2.04px;text-align:center;transform:scaleX(0.739)">A</b></i><i><b style="width:11.91px;margin-left:-0.96px;text-align:center;transform:scaleX(0.873)">L</b></i><i>_</i><i><b style="width:14.08px;margin-left:-2.04px;text-align:center;transform:scaleX(0.739)">G</b></i><i><b style="width:10.84px;margin-left:-0.42px;text-align:center;transform:scaleX(0.959)">P</b></i><i><b style="width:6.49px;margin-left:1.75px;text-align:center;transform:scaleX(1.150)">I</b></i><i><b style="width:14.08px;margin-left:-2.04px;text-align:center;transform:scaleX(0.739)">O</b></i><i>_</i><i><b style="width:18.41px;margin-left:-4.20px;text-align:center;transform:scaleX(0.609)">W</b></i><i>r</i><i>i</i><i>t</i><i>e</i><i><b style="width:10.84px;margin-left:-0.42px;text-align:center;transform:scaleX(0.959)">P</b></i><i>i</i><i>n</i><i>(</i><i><b style="width:14.08px;margin-left:-2.04px;text-align:center;transform:scaleX(0.739)">G</b></i><i><b style="width:10.84px;margin-left:-0.42px;text-align:center;transform:scaleX(0.959)">P</b></i><i><b style="width:6.49px;margin-left:1.75px;text-align:center;transform:scaleX(1.150)">I</b></i><i><b style="width:14.08px;margin-left:-2.04px;text-align:center;transform:scaleX(0.739)">O</b></i><i><b style="width:13.01px;margin-left:-1.50px;text-align:center;transform:scaleX(0.800)">C</b></i><i>,</i><i> </i><i><b style="width:14.08px;margin-left:-2.04px;text-align:center;transform:scaleX(0.739)">G</b></i><i><b style="width:10.84px;margin-left:-0.42px;text-align:center;transform:scaleX(0.959)">P</b></i><i><b style="width:6.49px;margin-left:1.75px;text-align:center;transform:scaleX(1.150)">I</b></i><i><b style="width:14.08px;margin-left:-2.04px;text-align:center;transform:scaleX(0.739)">O</b></i><i>_</i><i><b style="width:10.84px;margin-left:-0.42px;text-align:center;transform:scaleX(0.959)">P</b></i><i><b style="width:6.49px;margin-left:1.75px;text-align:center;transform:scaleX(1.150)">I</b></i><i><b style="width:14.08px;margin-left:-2.04px;text-align:center;transform:scaleX(0.739)">N</b></i><i>_</i><i>7</i><i>,</i><i> </i><i><b style="width:14.08px;margin-left:-2.04px;text-align:center;transform:scaleX(0.739)">G</b></i><i><b style="width:10.84px;margin-left:-0.42px;text-align:center;transform:scaleX(0.959)">P</b></i><i><b style="width:6.49px;margin-left:1.75px;text-align:center;transform:scaleX(1.150)">I</b></i><i><b style="width:14.08px;margin-left:-2.04px;text-align:center;transform:scaleX(0.739)">O</b></i><i>_</i><i><b style="width:10.84px;margin-left:-0.42px;text-align:center;transform:scaleX(0.959)">P</b></i><i><b style="width:6.49px;margin-left:1.75px;text-align:center;transform:scaleX(1.150)">I</b></i><i><b style="width:14.08px;margin-left:-2.04px;text-align:center;transform:scaleX(0.739)">N</b></i><i>_</i><i><b style="width:13.01px;margin-left:-1.50px;text-align:center;transform:scaleX(0.800)">R</b></i><i><b style="width:11.91px;margin-left:-0.96px;text-align:center;transform:scaleX(0.873)">E</b></i><i><b style="width:10.84px;margin-left:-0.42px;text-align:center;transform:scaleX(0.959)">S</b></i><i><b style="width:11.91px;margin-left:-0.96px;text-align:center;transform:scaleX(0.873)">E</b></i><i><b style="width:11.91px;margin-left:-0.96px;text-align:center;transform:scaleX(0.873)">T</b></i><i>)</i><i>;</i></div>
<div class="ln" style="left:0px;top:61px">218</div>
<div class="ln" style="left:0px;top:81px">219</div>
<div class="c" style="left:88px;top:81px;color:#008000"><i> </i><i> </i><i>/</i><i><b style="width:9.75px;margin-left:0.12px;text-align:center;transform:translateY(4px) scale(0.95,1.25)">*</b></i><i><b style="width:13.01px;margin-left:-1.50px;text-align:center;transform:scaleX(0.800)">C</b></i><i>o</i><i>n</i><i>f</i><i>i</i><i>g</i><i>u</i><i>r</i><i>e</i><i> </i><i><b style="width:14.08px;margin-left:-2.04px;text-align:center;transform:scaleX(0.739)">G</b></i><i><b style="width:10.84px;margin-left:-0.42px;text-align:center;transform:scaleX(0.959)">P</b></i><i><b style="width:6.49px;margin-left:1.75px;text-align:center;transform:scaleX(1.150)">I</b></i><i><b style="width:14.08px;margin-left:-2.04px;text-align:center;transform:scaleX(0.739)">O</b></i><i> </i><i>p</i><i>i</i><i>n</i><i> </i><i>:</i><i> </i><i><b style="width:10.84px;margin-left:-0.42px;text-align:center;transform:scaleX(0.959)">P</b></i><i><b style="width:13.01px;margin-left:-1.50px;text-align:center;transform:scaleX(0.800)">C</b></i><i>7</i><i> </i><i><b style="width:9.75px;margin-left:0.12px;text-align:center;transform:translateY(4px) scale(0.95,1.25)">*</b></i><i>/</i></div>
<div class="ln" style="left:0px;top:101px">220</div>
<div class="c" style="left:88px;top:101px;color:#000"><i> </i><i> </i><i><b style="width:14.08px;margin-left:-2.04px;text-align:center;transform:scaleX(0.739)">G</b></i><i><b style="width:10.84px;margin-left:-0.42px;text-align:center;transform:scaleX(0.959)">P</b></i><i><b style="width:6.49px;margin-left:1.75px;text-align:center;transform:scaleX(1.150)">I</b></i><i><b style="width:14.08px;margin-left:-2.04px;text-align:center;transform:scaleX(0.739)">O</b></i><i>_</i><i><b style="width:6.49px;margin-left:1.75px;text-align:center;transform:scaleX(1.150)">I</b></i><i>n</i><i>i</i><i>t</i><i><b style="width:10.84px;margin-left:-0.42px;text-align:center;transform:scaleX(0.959)">S</b></i><i>t</i><i>r</i><i>u</i><i>c</i><i>t</i><i>.</i><i><b style="width:10.84px;margin-left:-0.42px;text-align:center;transform:scaleX(0.959)">P</b></i><i>i</i><i>n</i><i> </i><i><b style="width:11.00px;margin-left:-0.50px;text-align:center;transform:scaleX(0.946)">=</b></i><i> </i><i><b style="width:14.08px;margin-left:-2.04px;text-align:center;transform:scaleX(0.739)">G</b></i><i><b style="width:10.84px;margin-left:-0.42px;text-align:center;transform:scaleX(0.959)">P</b></i><i><b style="width:6.49px;margin-left:1.75px;text-align:center;transform:scaleX(1.150)">I</b></i><i><b style="width:14.08px;margin-left:-2.04px;text-align:center;transform:scaleX(0.739)">O</b></i><i>_</i><i><b style="width:10.84px;margin-left:-0.42px;text-align:center;transform:scaleX(0.959)">P</b></i><i><b style="width:6.49px;margin-left:1.75px;text-align:center;transform:scaleX(1.150)">I</b></i><i><b style="width:14.08px;margin-left:-2.04px;text-align:center;transform:scaleX(0.739)">N</b></i><i>_</i><i>7</i><i>;</i></div>
<div class="ln" style="left:0px;top:121px">221</div>
<div class="c" style="left:88px;top:121px;color:#000"><i> </i><i> </i><i><b style="width:14.08px;margin-left:-2.04px;text-align:center;transform:scaleX(0.739)">G</b></i><i><b style="width:10.84px;margin-left:-0.42px;text-align:center;transform:scaleX(0.959)">P</b></i><i><b style="width:6.49px;margin-left:1.75px;text-align:center;transform:scaleX(1.150)">I</b></i><i><b style="width:14.08px;margin-left:-2.04px;text-align:center;transform:scaleX(0.739)">O</b></i><i>_</i><i><b style="width:6.49px;margin-left:1.75px;text-align:center;transform:scaleX(1.150)">I</b></i><i>n</i><i>i</i><i>t</i><i><b style="width:10.84px;margin-left:-0.42px;text-align:center;transform:scaleX(0.959)">S</b></i><i>t</i><i>r</i><i>u</i><i>c</i><i>t</i><i>.</i><i><b style="width:17.34px;margin-left:-3.67px;text-align:center;transform:scaleX(0.646)">M</b></i><i>o</i><i>d</i><i>e</i><i> </i><i><b style="width:11.00px;margin-left:-0.50px;text-align:center;transform:scaleX(0.946)">=</b></i><i> </i><i><b style="width:14.08px;margin-left:-2.04px;text-align:center;transform:scaleX(0.739)">G</b></i><i><b style="width:10.84px;margin-left:-0.42px;text-align:center;transform:scaleX(0.959)">P</b></i><i><b style="width:6.49px;margin-left:1.75px;text-align:center;transform:scaleX(1.150)">I</b></i><i><b style="width:14.08px;margin-left:-2.04px;text-align:center;transform:scaleX(0.739)">O</b></i><i>_</i><i><b style="width:17.34px;margin-left:-3.67px;text-align:center;transform:scaleX(0.646)">M</b></i><i><b style="width:14.08px;margin-left:-2.04px;text-align:center;transform:scaleX(0.739)">O</b></i><i><b style="width:14.08px;margin-left:-2.04px;text-align:center;transform:scaleX(0.739)">D</b></i><i><b style="width:11.91px;margin-left:-0.96px;text-align:center;transform:scaleX(0.873)">E</b></i><i>_</i><i><b style="width:14.08px;margin-left:-2.04px;text-align:center;transform:scaleX(0.739)">O</b></i><i><b style="width:14.08px;margin-left:-2.04px;text-align:center;transform:scaleX(0.739)">U</b></i><i><b style="width:11.91px;margin-left:-0.96px;text-align:center;transform:scaleX(0.873)">T</b></i><i><b style="width:10.84px;margin-left:-0.42px;text-align:center;transform:scaleX(0.959)">P</b></i><i><b style="width:14.08px;margin-left:-2.04px;text-align:center;transform:scaleX(0.739)">U</b></i><i><b style="width:11.91px;margin-left:-0.96px;text-align:center;transform:scaleX(0.873)">T</b></i><i>_</i><i><b style="width:10.84px;margin-left:-0.42px;text-align:center;transform:scaleX(0.959)">P</b></i><i><b style="width:10.84px;margin-left:-0.42px;text-align:center;transform:scaleX(0.959)">P</b></i><i>;</i></div>
<div class="ln" style="left:0px;top:141px">222</div>
<div class="c" style="left:88px;top:141px;color:#000"><i> </i><i> </i><i><b style="width:14.08px;margin-left:-2.04px;text-align:center;transform:scaleX(0.739)">G</b></i><i><b style="width:10.84px;margin-left:-0.42px;text-align:center;transform:scaleX(0.959)">P</b></i><i><b style="width:6.49px;margin-left:1.75px;text-align:center;transform:scaleX(1.150)">I</b></i><i><b style="width:14.08px;margin-left:-2.04px;text-align:center;transform:scaleX(0.739)">O</b></i><i>_</i><i><b style="width:6.49px;margin-left:1.75px;text-align:center;transform:scaleX(1.150)">I</b></i><i>n</i><i>i</i><i>t</i><i><b style="width:10.84px;margin-left:-0.42px;text-align:center;transform:scaleX(0.959)">S</b></i><i>t</i><i>r</i><i>u</i><i>c</i><i>t</i><i>.</i><i><b style="width:10.84px;margin-left:-0.42px;text-align:center;transform:scaleX(0.959)">P</b></i><i>u</i><i>l</i><i>l</i><i> </i><i><b style="width:11.00px;margin-left:-0.50px;text-align:center;transform:scaleX(0.946)">=</b></i><i> </i><i><b style="width:14.08px;margin-left:-2.04px;text-align:center;transform:scaleX(0.739)">G</b></i><i><b style="width:10.84px;margin-left:-0.42px;text-align:center;transform:scaleX(0.959)">P</b></i><i><b style="width:6.49px;margin-left:1.75px;text-align:center;transform:scaleX(1.150)">I</b></i><i><b style="width:14.08px;margin-left:-2.04px;text-align:center;transform:scaleX(0.739)">O</b></i><i>_</i><i><b style="width:14.08px;margin-left:-2.04px;text-align:center;transform:scaleX(0.739)">N</b></i><i><b style="width:14.08px;margin-left:-2.04px;text-align:center;transform:scaleX(0.739)">O</b></i><i><b style="width:10.84px;margin-left:-0.42px;text-align:center;transform:scaleX(0.959)">P</b></i><i><b style="width:14.08px;margin-left:-2.04px;text-align:center;transform:scaleX(0.739)">U</b></i><i><b style="width:11.91px;margin-left:-0.96px;text-align:center;transform:scaleX(0.873)">L</b></i><i><b style="width:11.91px;margin-left:-0.96px;text-align:center;transform:scaleX(0.873)">L</b></i><i>;</i></div>
<div class="ln" style="left:0px;top:161px">223</div>
<div class="c" style="left:88px;top:161px;color:#000"><i> </i><i> </i><i><b style="width:14.08px;margin-left:-2.04px;text-align:center;transform:scaleX(0.739)">G</b></i><i><b style="width:10.84px;margin-left:-0.42px;text-align:center;transform:scaleX(0.959)">P</b></i><i><b style="width:6.49px;margin-left:1.75px;text-align:center;transform:scaleX(1.150)">I</b></i><i><b style="width:14.08px;margin-left:-2.04px;text-align:center;transform:scaleX(0.739)">O</b></i><i>_</i><i><b style="width:6.49px;margin-left:1.75px;text-align:center;transform:scaleX(1.150)">I</b></i><i>n</i><i>i</i><i>t</i><i><b style="width:10.84px;margin-left:-0.42px;text-align:center;transform:scaleX(0.959)">S</b></i><i>t</i><i>r</i><i>u</i><i>c</i><i>t</i><i>.</i><i><b style="width:10.84px;margin-left:-0.42px;text-align:center;transform:scaleX(0.959)">S</b></i><i>p</i><i>e</i><i>e</i><i>d</i><i> </i><i><b style="width:11.00px;margin-left:-0.50px;text-align:center;transform:scaleX(0.946)">=</b></i><i> </i><i><b style="width:14.08px;margin-left:-2.04px;text-align:center;transform:scaleX(0.739)">G</b></i><i><b style="width:10.84px;margin-left:-0.42px;text-align:center;transform:scaleX(0.959)">P</b></i><i><b style="width:6.49px;margin-left:1.75px;text-align:center;transform:scaleX(1.150)">I</b></i><i><b style="width:14.08px;margin-left:-2.04px;text-align:center;transform:scaleX(0.739)">O</b></i><i>_</i><i><b style="width:10.84px;margin-left:-0.42px;text-align:center;transform:scaleX(0.959)">S</b></i><i><b style="width:10.84px;margin-left:-0.42px;text-align:center;transform:scaleX(0.959)">P</b></i><i><b style="width:11.91px;margin-left:-0.96px;text-align:center;transform:scaleX(0.873)">E</b></i><i><b style="width:11.91px;margin-left:-0.96px;text-align:center;transform:scaleX(0.873)">E</b></i><i><b style="width:14.08px;margin-left:-2.04px;text-align:center;transform:scaleX(0.739)">D</b></i><i>_</i><i><b style="width:10.84px;margin-left:-0.42px;text-align:center;transform:scaleX(0.959)">F</b></i><i><b style="width:13.01px;margin-left:-1.50px;text-align:center;transform:scaleX(0.800)">R</b></i><i><b style="width:11.91px;margin-left:-0.96px;text-align:center;transform:scaleX(0.873)">E</b></i><i><b style="width:14.08px;margin-left:-2.04px;text-align:center;transform:scaleX(0.739)">Q</b></i><i>_</i><i><b style="width:11.91px;margin-left:-0.96px;text-align:center;transform:scaleX(0.873)">L</b></i><i><b style="width:14.08px;margin-left:-2.04px;text-align:center;transform:scaleX(0.739)">O</b></i><i><b style="width:18.41px;margin-left:-4.20px;text-align:center;transform:scaleX(0.609)">W</b></i><i>;</i></div>
<div class="ln" style="left:0px;top:181px">224</div>
<div class="c" style="left:88px;top:181px;color:#000"><i> </i><i> </i><i><b style="width:14.08px;margin-left:-2.04px;text-align:center;transform:scaleX(0.739)">H</b></i><i><b style="width:14.08px;margin-left:-2.04px;text-align:center;transform:scaleX(0.739)">A</b></i><i><b style="width:11.91px;margin-left:-0.96px;text-align:center;transform:scaleX(0.873)">L</b></i><i>_</i><i><b style="width:14.08px;margin-left:-2.04px;text-align:center;transform:scaleX(0.739)">G</b></i><i><b style="width:10.84px;margin-left:-0.42px;text-align:center;transform:scaleX(0.959)">P</b></i><i><b style="width:6.49px;margin-left:1.75px;text-align:center;transform:scaleX(1.150)">I</b></i><i><b style="width:14.08px;margin-left:-2.04px;text-align:center;transform:scaleX(0.739)">O</b></i><i>_</i><i><b style="width:6.49px;margin-left:1.75px;text-align:center;transform:scaleX(1.150)">I</b></i><i>n</i><i>i</i><i>t</i><i>(</i><i><b style="width:14.08px;margin-left:-2.04px;text-align:center;transform:scaleX(0.739)">G</b></i><i><b style="width:10.84px;margin-left:-0.42px;text-align:center;transform:scaleX(0.959)">P</b></i><i><b style="width:6.49px;margin-left:1.75px;text-align:center;transform:scaleX(1.150)">I</b></i><i><b style="width:14.08px;margin-left:-2.04px;text-align:center;transform:scaleX(0.739)">O</b></i><i><b style="width:13.01px;margin-left:-1.50px;text-align:center;transform:scaleX(0.800)">C</b></i><i>,</i><i> </i><i><b style="width:15.17px;margin-left:-2.58px;text-align:center;transform:scaleX(0.686)">&amp;</b></i><i><b style="width:14.08px;margin-left:-2.04px;text-align:center;transform:scaleX(0.739)">G</b></i><i><b style="width:10.84px;margin-left:-0.42px;text-align:center;transform:scaleX(0.959)">P</b></i><i><b style="width:6.49px;margin-left:1.75px;text-align:center;transform:scaleX(1.150)">I</b></i><i><b style="width:14.08px;margin-left:-2.04px;text-align:center;transform:scaleX(0.739)">O</b></i><i>_</i><i><b style="width:6.49px;margin-left:1.75px;text-align:center;transform:scaleX(1.150)">I</b></i><i>n</i><i>i</i><i>t</i><i><b style="width:10.84px;margin-left:-0.42px;text-align:center;transform:scaleX(0.959)">S</b></i><i>t</i><i>r</i><i>u</i><i>c</i><i>t</i><i>)</i><i>;</i></div>
<div class="ln" style="left:0px;top:201px">225</div>
<div class="ln" style="left:0px;top:221px">226</div>
<div class="c" style="left:88px;top:221px;color:#000"><i>}</i></div>
<div class="ln" style="left:0px;top:241px">227</div>
<div class="ln" style="left:0px;top:261px">228</div>
<div class="c" style="left:88px;top:261px;color:#008000"><i>/</i><i><b style="width:9.75px;margin-left:0.12px;text-align:center;transform:translateY(4px) scale(0.95,1.25)">*</b></i><i> </i><i><b style="width:14.08px;margin-left:-2.04px;text-align:center;transform:scaleX(0.739)">U</b></i><i><b style="width:10.84px;margin-left:-0.42px;text-align:center;transform:scaleX(0.959)">S</b></i><i><b style="width:11.91px;margin-left:-0.96px;text-align:center;transform:scaleX(0.873)">E</b></i><i><b style="width:13.01px;margin-left:-1.50px;text-align:center;transform:scaleX(0.800)">R</b></i><i> </i><i><b style="width:13.01px;margin-left:-1.50px;text-align:center;transform:scaleX(0.800)">C</b></i><i><b style="width:14.08px;margin-left:-2.04px;text-align:center;transform:scaleX(0.739)">O</b></i><i><b style="width:14.08px;margin-left:-2.04px;text-align:center;transform:scaleX(0.739)">D</b></i><i><b style="width:11.91px;margin-left:-0.96px;text-align:center;transform:scaleX(0.873)">E</b></i><i> </i><i><b style="width:13.01px;margin-left:-1.50px;text-align:center;transform:scaleX(0.800)">B</b></i><i><b style="width:11.91px;margin-left:-0.96px;text-align:center;transform:scaleX(0.873)">E</b></i><i><b style="width:14.08px;margin-left:-2.04px;text-align:center;transform:scaleX(0.739)">G</b></i><i><b style="width:6.49px;margin-left:1.75px;text-align:center;transform:scaleX(1.150)">I</b></i><i><b style="width:14.08px;margin-left:-2.04px;text-align:center;transform:scaleX(0.739)">N</b></i><i> </i><i>4</i><i> </i><i><b style="width:9.75px;margin-left:0.12px;text-align:center;transform:translateY(4px) scale(0.95,1.25)">*</b></i><i>/</i></div>
<div class="ln" style="left:0px;top:281px">229</div>
<div class="c" style="left:88px;top:281px;color:#000"><i>v</i><i>o</i><i>i</i><i>d</i><i> </i><i><b style="width:14.08px;margin-left:-2.04px;text-align:center;transform:scaleX(0.739)">H</b></i><i><b style="width:14.08px;margin-left:-2.04px;text-align:center;transform:scaleX(0.739)">A</b></i><i><b style="width:11.91px;margin-left:-0.96px;text-align:center;transform:scaleX(0.873)">L</b></i><i>_</i><i><b style="width:11.91px;margin-left:-0.96px;text-align:center;transform:scaleX(0.873)">T</b></i><i><b style="width:6.49px;margin-left:1.75px;text-align:center;transform:scaleX(1.150)">I</b></i><i><b style="width:17.34px;margin-left:-3.67px;text-align:center;transform:scaleX(0.646)">M</b></i><i>_</i><i><b style="width:10.84px;margin-left:-0.42px;text-align:center;transform:scaleX(0.959)">P</b></i><i>e</i><i>r</i><i>i</i><i>o</i><i>d</i><i><b style="width:11.91px;margin-left:-0.96px;text-align:center;transform:scaleX(0.873)">E</b></i><i>l</i><i>a</i><i>p</i><i>s</i><i>e</i><i>d</i><i><b style="width:13.01px;margin-left:-1.50px;text-align:center;transform:scaleX(0.800)">C</b></i><i>a</i><i>l</i><i>l</i><i>b</i><i>a</i><i>c</i><i>k</i><i>(</i><i><b style="width:11.91px;margin-left:-0.96px;text-align:center;transform:scaleX(0.873)">T</b></i><i><b style="width:6.49px;margin-left:1.75px;text-align:center;transform:scaleX(1.150)">I</b></i><i><b style="width:17.34px;margin-left:-3.67px;text-align:center;transform:scaleX(0.646)">M</b></i><i>_</i><i><b style="width:14.08px;margin-left:-2.04px;text-align:center;transform:scaleX(0.739)">H</b></i><i>a</i><i>n</i><i>d</i><i>l</i><i>e</i><i><b style="width:11.91px;margin-left:-0.96px;text-align:center;transform:scaleX(0.873)">T</b></i><i>y</i><i>p</i><i>e</i><i><b style="width:14.08px;margin-left:-2.04px;text-align:center;transform:scaleX(0.739)">D</b></i><i>e</i><i>f</i><i> </i><i><b style="width:9.75px;margin-left:0.12px;text-align:center;transform:translateY(4px) scale(0.95,1.25)">*</b></i><i>h</i><i>t</i><i>i</i><i><b style="width:15.17px;margin-left:-2.58px;text-align:center;transform:scaleX(0.686)">m</b></i><i>)</i></div>
<div class="ln" style="left:0px;top:301px">230</div>
<div class="c" style="left:88px;top:301px;color:#000"><i>{</i></div>
<div class="ln" style="left:0px;top:321px">231</div>
<div class="c" style="left:88px;top:321px;color:#000"><i> </i><i> </i><i>t</i><i>i</i><i><b style="width:15.17px;margin-left:-2.58px;text-align:center;transform:scaleX(0.686)">m</b></i><i>e</i><i>r</i><i>_</i><i>c</i><i>o</i><i>u</i><i>n</i><i>t</i><i><b style="width:11.00px;margin-left:-0.50px;text-align:center;transform:scaleX(0.946)">+</b></i><i><b style="width:11.00px;margin-left:-0.50px;text-align:center;transform:scaleX(0.946)">+</b></i><i>;</i></div>
<div class="ln" style="left:0px;top:341px">232</div>
<div class="c" style="left:88px;top:341px;color:#000"><i> </i><i> </i><i>i</i><i>f</i><i> </i><i>(</i><i>t</i><i>i</i><i><b style="width:15.17px;margin-left:-2.58px;text-align:center;transform:scaleX(0.686)">m</b></i><i>e</i><i>r</i><i>_</i><i>c</i><i>o</i><i>u</i><i>n</i><i>t</i><i><b style="width:11.00px;margin-left:-0.50px;text-align:center;transform:scaleX(0.946)">=</b></i><i><b style="width:11.00px;margin-left:-0.50px;text-align:center;transform:scaleX(0.946)">=</b></i><i>1</i><i>0</i><i>0</i><i>0</i><i>)</i></div>
<div class="ln" style="left:0px;top:361px">233</div>
<div class="c" style="left:88px;top:361px;color:#000"><i> </i><i> </i><i>{</i></div>
<div class="ln" style="left:0px;top:381px">234</div>
<div class="c" style="left:88px;top:381px;color:#000"><i> </i><i> </i><i> </i><i> </i><i>t</i><i>i</i><i><b style="width:15.17px;margin-left:-2.58px;text-align:center;transform:scaleX(0.686)">m</b></i><i>e</i><i>r</i><i>_</i><i>c</i><i>o</i><i>u</i><i>n</i><i>t</i><i><b style="width:11.00px;margin-left:-0.50px;text-align:center;transform:scaleX(0.946)">=</b></i><i>0</i><i>;</i></div>
<div class="ln" style="left:0px;top:401px">235</div>
<div class="c" style="left:88px;top:401px;color:#000"><i> </i><i> </i><i> </i><i> </i><i><b style="width:14.08px;margin-left:-2.04px;text-align:center;transform:scaleX(0.739)">H</b></i><i><b style="width:14.08px;margin-left:-2.04px;text-align:center;transform:scaleX(0.739)">A</b></i><i><b style="width:11.91px;margin-left:-0.96px;text-align:center;transform:scaleX(0.873)">L</b></i><i>_</i><i><b style="width:14.08px;margin-left:-2.04px;text-align:center;transform:scaleX(0.739)">G</b></i><i><b style="width:10.84px;margin-left:-0.42px;text-align:center;transform:scaleX(0.959)">P</b></i><i><b style="width:6.49px;margin-left:1.75px;text-align:center;transform:scaleX(1.150)">I</b></i><i><b style="width:14.08px;margin-left:-2.04px;text-align:center;transform:scaleX(0.739)">O</b></i><i>_</i><i><b style="width:11.91px;margin-left:-0.96px;text-align:center;transform:scaleX(0.873)">T</b></i><i>o</i><i>g</i><i>g</i><i>l</i><i>e</i><i><b style="width:10.84px;margin-left:-0.42px;text-align:center;transform:scaleX(0.959)">P</b></i><i>i</i><i>n</i><i>(</i><i><b style="width:14.08px;margin-left:-2.04px;text-align:center;transform:scaleX(0.739)">G</b></i><i><b style="width:10.84px;margin-left:-0.42px;text-align:center;transform:scaleX(0.959)">P</b></i><i><b style="width:6.49px;margin-left:1.75px;text-align:center;transform:scaleX(1.150)">I</b></i><i><b style="width:14.08px;margin-left:-2.04px;text-align:center;transform:scaleX(0.739)">O</b></i><i><b style="width:13.01px;margin-left:-1.50px;text-align:center;transform:scaleX(0.800)">C</b></i><i>,</i><i><b style="width:14.08px;margin-left:-2.04px;text-align:center;transform:scaleX(0.739)">G</b></i><i><b style="width:10.84px;margin-left:-0.42px;text-align:center;transform:scaleX(0.959)">P</b></i><i><b style="width:6.49px;margin-left:1.75px;text-align:center;transform:scaleX(1.150)">I</b></i><i><b style="width:14.08px;margin-left:-2.04px;text-align:center;transform:scaleX(0.739)">O</b></i><i>_</i><i><b style="width:10.84px;margin-left:-0.42px;text-align:center;transform:scaleX(0.959)">P</b></i><i><b style="width:6.49px;margin-left:1.75px;text-align:center;transform:scaleX(1.150)">I</b></i><i><b style="width:14.08px;margin-left:-2.04px;text-align:center;transform:scaleX(0.739)">N</b></i><i>_</i><i>7</i><i>)</i><i>;</i></div>
<div class="ln" style="left:0px;top:421px">236</div>
<div class="c" style="left:88px;top:421px;color:#000"><i> </i><i> </i><i>}</i></div>
<div class="ln" style="left:0px;top:441px">237</div>
<div class="c" style="left:88px;top:441px;color:#000"><i>}</i></div>
<div class="ln" style="left:0px;top:461px">238</div>
<div class="c" style="left:88px;top:461px;color:#008000"><i>/</i><i><b style="width:9.75px;margin-left:0.12px;text-align:center;transform:translateY(4px) scale(0.95,1.25)">*</b></i><i> </i><i><b style="width:14.08px;margin-left:-2.04px;text-align:center;transform:scaleX(0.739)">U</b></i><i><b style="width:10.84px;margin-left:-0.42px;text-align:center;transform:scaleX(0.959)">S</b></i><i><b style="width:11.91px;margin-left:-0.96px;text-align:center;transform:scaleX(0.873)">E</b></i><i><b style="width:13.01px;margin-left:-1.50px;text-align:center;transform:scaleX(0.800)">R</b></i><i> </i><i><b style="width:13.01px;margin-left:-1.50px;text-align:center;transform:scaleX(0.800)">C</b></i><i><b style="width:14.08px;margin-left:-2.04px;text-align:center;transform:scaleX(0.739)">O</b></i><i><b style="width:14.08px;margin-left:-2.04px;text-align:center;transform:scaleX(0.739)">D</b></i><i><b style="width:11.91px;margin-left:-0.96px;text-align:center;transform:scaleX(0.873)">E</b></i><i> </i><i><b style="width:11.91px;margin-left:-0.96px;text-align:center;transform:scaleX(0.873)">E</b></i><i><b style="width:14.08px;margin-left:-2.04px;text-align:center;transform:scaleX(0.739)">N</b></i><i><b style="width:14.08px;margin-left:-2.04px;text-align:center;transform:scaleX(0.739)">D</b></i><i> </i><i>4</i><i> </i><i><b style="width:9.75px;margin-left:0.12px;text-align:center;transform:translateY(4px) scale(0.95,1.25)">*</b></i><i>/</i></div>
<div class="ln" style="left:0px;top:481px">239</div>
<div class="ln" style="left:0px;top:501px">240</div>
<div class="c" style="left:88px;top:501px;color:#008000"><i>/</i><i><b style="width:9.75px;margin-left:0.12px;text-align:center;transform:translateY(4px) scale(0.95,1.25)">*</b></i><i><b style="width:9.75px;margin-left:0.12px;text-align:center;transform:translateY(4px) scale(0.95,1.25)">*</b></i></div>
<div class="ln" style="left:0px;top:521px">241</div>
<div class="c" style="left:88px;top:521px;color:#008000"><i> </i><i> </i><i><b style="width:9.75px;margin-left:0.12px;text-align:center;transform:translateY(4px) scale(0.95,1.25)">*</b></i><i> </i><i><b style="width:17.96px;margin-left:-3.98px;text-align:center;transform:translateY(-0.5px) scale(0.6,0.86)">@</b></i><i>b</i><i>r</i><i>i</i><i>e</i><i>f</i><i> </i><i> </i><i><b style="width:11.91px;margin-left:-0.96px;text-align:center;transform:scaleX(0.873)">T</b></i><i>h</i><i>i</i><i>s</i><i> </i><i>f</i><i>u</i><i>n</i><i>c</i><i>t</i><i>i</i><i>o</i><i>n</i><i> </i><i>i</i><i>s</i><i> </i><i>e</i><i>x</i><i>e</i><i>c</i><i>u</i><i>t</i><i>e</i><i>d</i><i> </i><i>i</i><i>n</i><i> </i><i>c</i><i>a</i><i>s</i><i>e</i><i> </i><i>o</i><i>f</i><i> </i><i>e</i><i>r</i><i>r</i><i>o</i><i>r</i><i> </i><i>o</i><i>c</i><i>c</i><i>u</i><i>r</i><i>r</i><i>e</i><i>n</i><i>c</i><i>e</i><i>.</i></div>
<div class="ln" style="left:0px;top:541px">242</div>
<div class="c" style="left:88px;top:541px;color:#008000"><i> </i><i> </i><i><b style="width:9.75px;margin-left:0.12px;text-align:center;transform:translateY(4px) scale(0.95,1.25)">*</b></i><i> </i><i><b style="width:17.96px;margin-left:-3.98px;text-align:center;transform:translateY(-0.5px) scale(0.6,0.86)">@</b></i><i>r</i><i>e</i><i>t</i><i>v</i><i>a</i><i>l</i><i> </i><i><b style="width:14.08px;margin-left:-2.04px;text-align:center;transform:scaleX(0.739)">N</b></i><i>o</i><i>n</i><i>e</i></div>
<div class="ln" style="left:0px;top:561px">243</div>
<div class="c" style="left:88px;top:561px;color:#008000"><i> </i><i> </i><i><b style="width:9.75px;margin-left:0.12px;text-align:center;transform:translateY(4px) scale(0.95,1.25)">*</b></i><i>/</i></div>
</div>
<div style="position:absolute;left:269px;top:129px;width:1px;height:250px;background:#808080"></div>
<div style="position:absolute;left:269px;top:379px;width:6px;height:1px;background:#808080"></div>
<svg style="position:absolute;left:264px;top:434px" width="11" height="11" viewBox="0 0 11 11"><rect x="0.5" y="0.5" width="10" height="10" fill="#f4f4f4" stroke="#8a8a8a"/><path d="M2.5 5.5 H8.5" stroke="#5a5a5a"/></svg>
<div style="position:absolute;left:269px;top:445px;width:1px;height:134px;background:#808080"></div>
<div style="position:absolute;left:269px;top:579px;width:6px;height:1px;background:#808080"></div>
<svg style="position:absolute;left:264px;top:494px" width="11" height="11" viewBox="0 0 11 11"><rect x="0.5" y="0.5" width="10" height="10" fill="#f4f4f4" stroke="#8a8a8a"/><path d="M2.5 5.5 H8.5" stroke="#5a5a5a"/></svg>
<div style="position:absolute;left:269px;top:505px;width:1px;height:54px;background:#808080"></div>
<div style="position:absolute;left:269px;top:559px;width:6px;height:1px;background:#808080"></div>
<svg style="position:absolute;left:264px;top:634px" width="11" height="11" viewBox="0 0 11 11"><rect x="0.5" y="0.5" width="10" height="10" fill="#f4f4f4" stroke="#8a8a8a"/><path d="M2.5 5.5 H8.5" stroke="#5a5a5a"/></svg>
<div style="position:absolute;left:269px;top:645px;width:1px;height:53px;background:#808080"></div>
<div style="position:absolute;left:1419px;top:129px;width:17px;height:569px;background:#f0f0f0"></div>
<div style="position:absolute;left:1419px;top:567px;width:15px;height:55px;background:#cdcdcd"></div>
<svg style="position:absolute;left:1423px;top:135px" width="8" height="6" viewBox="0 0 8 6"><path d="M0.5 5.5 L4 1.5 L7.5 5.5" fill="none" stroke="#606060" stroke-width="1.8"/></svg>
<svg style="position:absolute;left:1423px;top:686px" width="8" height="6" viewBox="0 0 8 6"><path d="M0.5 0.5 L4 4.5 L7.5 0.5" fill="none" stroke="#606060" stroke-width="1.8"/></svg>
<div style="position:absolute;left:189px;top:698px;width:1248px;height:18px;background:#f0f0f0"></div>
<div style="position:absolute;left:206px;top:699px;width:681px;height:15px;background:#cdcdcd"></div>
<svg style="position:absolute;left:194px;top:703px" width="6" height="8" viewBox="0 0 6 8"><path d="M5.5 0.5 L1.5 4 L5.5 7.5" fill="none" stroke="#606060" stroke-width="1.8"/></svg>
<svg style="position:absolute;left:1407px;top:703px" width="6" height="8" viewBox="0 0 6 8"><path d="M0.5 0.5 L4.5 4 L0.5 7.5" fill="none" stroke="#606060" stroke-width="1.8"/></svg>
<div style="position:absolute;left:188px;top:716px;width:1249px;height:1px;background:#fff"></div>
<div style="position:absolute;left:0px;top:724px;width:1440px;height:18px;background:linear-gradient(#bccbd9,#d5e1ee)"></div>
<div class="t" style="left:4px;top:727.84px;line-height:12px;font-size:12px;color:#000;font-weight:normal;font-family:'Liberation Sans',sans-serif;">Build Output</div>
<svg style="position:absolute;left:1408px;top:730px" width="8" height="8" viewBox="0 0 8 8"><rect x="1" y="0" width="5" height="5" fill="#000"/><rect x="3" y="1" width="1" height="4" fill="#dfe8f2"/><rect x="0" y="5" width="7" height="1" fill="#000"/><rect x="3" y="6" width="1" height="2" fill="#000"/></svg>
<div style="position:absolute;left:1424px;top:728px;width:12px;height:12px;background:#c84e4e;box-shadow:inset 0 0 0 1px #c84040"></div>
<svg style="position:absolute;left:1424px;top:728px" width="12" height="12" viewBox="0 0 12 12"><path d="M3.5 3.5 L8.5 8.5 M8.5 3.5 L3.5 8.5" stroke="#fff" stroke-width="1.7"/></svg>
<div style="position:absolute;left:0px;top:744px;width:1440px;height:2px;background:#6e6e6e"></div>
<div style="position:absolute;left:0px;top:746px;width:1440px;height:94px;background:#fff"></div>
<div style="position:absolute;left:0px;top:744px;width:2px;height:96px;background:#999"></div>
<div style="position:absolute;left:1422px;top:745px;width:17px;height:78px;background:#f0f0f0"></div>
<div style="position:absolute;left:2px;top:823px;width:1437px;height:16px;background:#f0f0f0"></div>
<div style="position:absolute;left:1439px;top:745px;width:1px;height:95px;background:#dcdcdc"></div>
<svg style="position:absolute;left:1426px;top:752px" width="8" height="6" viewBox="0 0 8 6"><path d="M0.5 5.5 L4 1.5 L7.5 5.5" fill="none" stroke="#c0c0c0" stroke-width="1.8"/></svg>
<svg style="position:absolute;left:1426px;top:812px" width="8" height="6" viewBox="0 0 8 6"><path d="M0.5 0.5 L4 4.5 L7.5 0.5" fill="none" stroke="#c0c0c0" stroke-width="1.8"/></svg>
<svg style="position:absolute;left:7px;top:827px" width="6" height="8" viewBox="0 0 6 8"><path d="M5.5 0.5 L1.5 4 L5.5 7.5" fill="none" stroke="#c0c0c0" stroke-width="1.8"/></svg>
<svg style="position:absolute;left:1410px;top:827px" width="6" height="8" viewBox="0 0 6 8"><path d="M0.5 0.5 L4.5 4 L0.5 7.5" fill="none" stroke="#c0c0c0" stroke-width="1.8"/></svg>
<div style="position:absolute;left:0px;top:839px;width:1440px;height:1px;background:#dcdcdc"></div>
<div style="position:absolute;left:0px;top:840px;width:1440px;height:2px;background:#fff"></div>
<div style="position:absolute;left:0px;top:842px;width:1440px;height:18px;background:#f0f0f0"></div>
<div style="position:absolute;left:883px;top:843px;width:1px;height:17px;background:#d4d4d4"></div>
<div style="position:absolute;left:1060px;top:843px;width:1px;height:17px;background:#d4d4d4"></div>
<div style="position:absolute;left:1197px;top:843px;width:1px;height:17px;background:#d4d4d4"></div>
<div style="position:absolute;left:1290px;top:843px;width:1px;height:17px;background:#d4d4d4"></div>
<div style="position:absolute;left:1316px;top:843px;width:1px;height:17px;background:#d4d4d4"></div>
<div style="position:absolute;left:1348px;top:843px;width:1px;height:17px;background:#d4d4d4"></div>
<div style="position:absolute;left:1379px;top:843px;width:1px;height:17px;background:#d4d4d4"></div>
<div style="position:absolute;left:1408px;top:843px;width:1px;height:17px;background:#d4d4d4"></div>
<div class="t" style="left:887px;top:847.43px;line-height:11.3px;font-size:11.3px;color:#000;font-weight:normal;font-family:'Liberation Sans',sans-serif;">ST-Link Debugger</div>
<div class="t" style="left:1202px;top:847.43px;line-height:11.3px;font-size:11.3px;color:#000;font-weight:normal;font-family:'Liberation Sans',sans-serif;">L:229 C:1</div>
<div class="t" style="left:1295px;top:847.43px;line-height:11.3px;font-size:11.3px;color:#000;font-family:'Liberation Sans'"><span style="display:inline-block;transform-origin:0 0;transform:scaleX(0.92)">CAP</span></div>
<div class="t" style="left:1321px;top:847.43px;line-height:11.3px;font-size:11.3px;color:#8d8d8d;font-family:'Liberation Sans'"><span style="display:inline-block;transform-origin:0 0;transform:scaleX(1.05)">NUM</span></div>
<div class="t" style="left:1353px;top:847.43px;line-height:11.3px;font-size:11.3px;color:#8d8d8d;font-family:'Liberation Sans'"><span style="display:inline-block;transform-origin:0 0;transform:scaleX(0.96)">SCRL</span></div>
<div class="t" style="left:1384px;top:847.43px;line-height:11.3px;font-size:11.3px;color:#8d8d8d;font-family:'Liberation Sans'"><span style="display:inline-block;transform-origin:0 0;transform:scaleX(1.0)">OVR</span></div>
<div class="t" style="left:1413px;top:847.43px;line-height:11.3px;font-size:11.3px;color:#8d8d8d;font-family:'Liberation Sans'"><span style="display:inline-block;transform-origin:0 0;transform:scaleX(1.1)">R/W</span></div>
</body></html>
